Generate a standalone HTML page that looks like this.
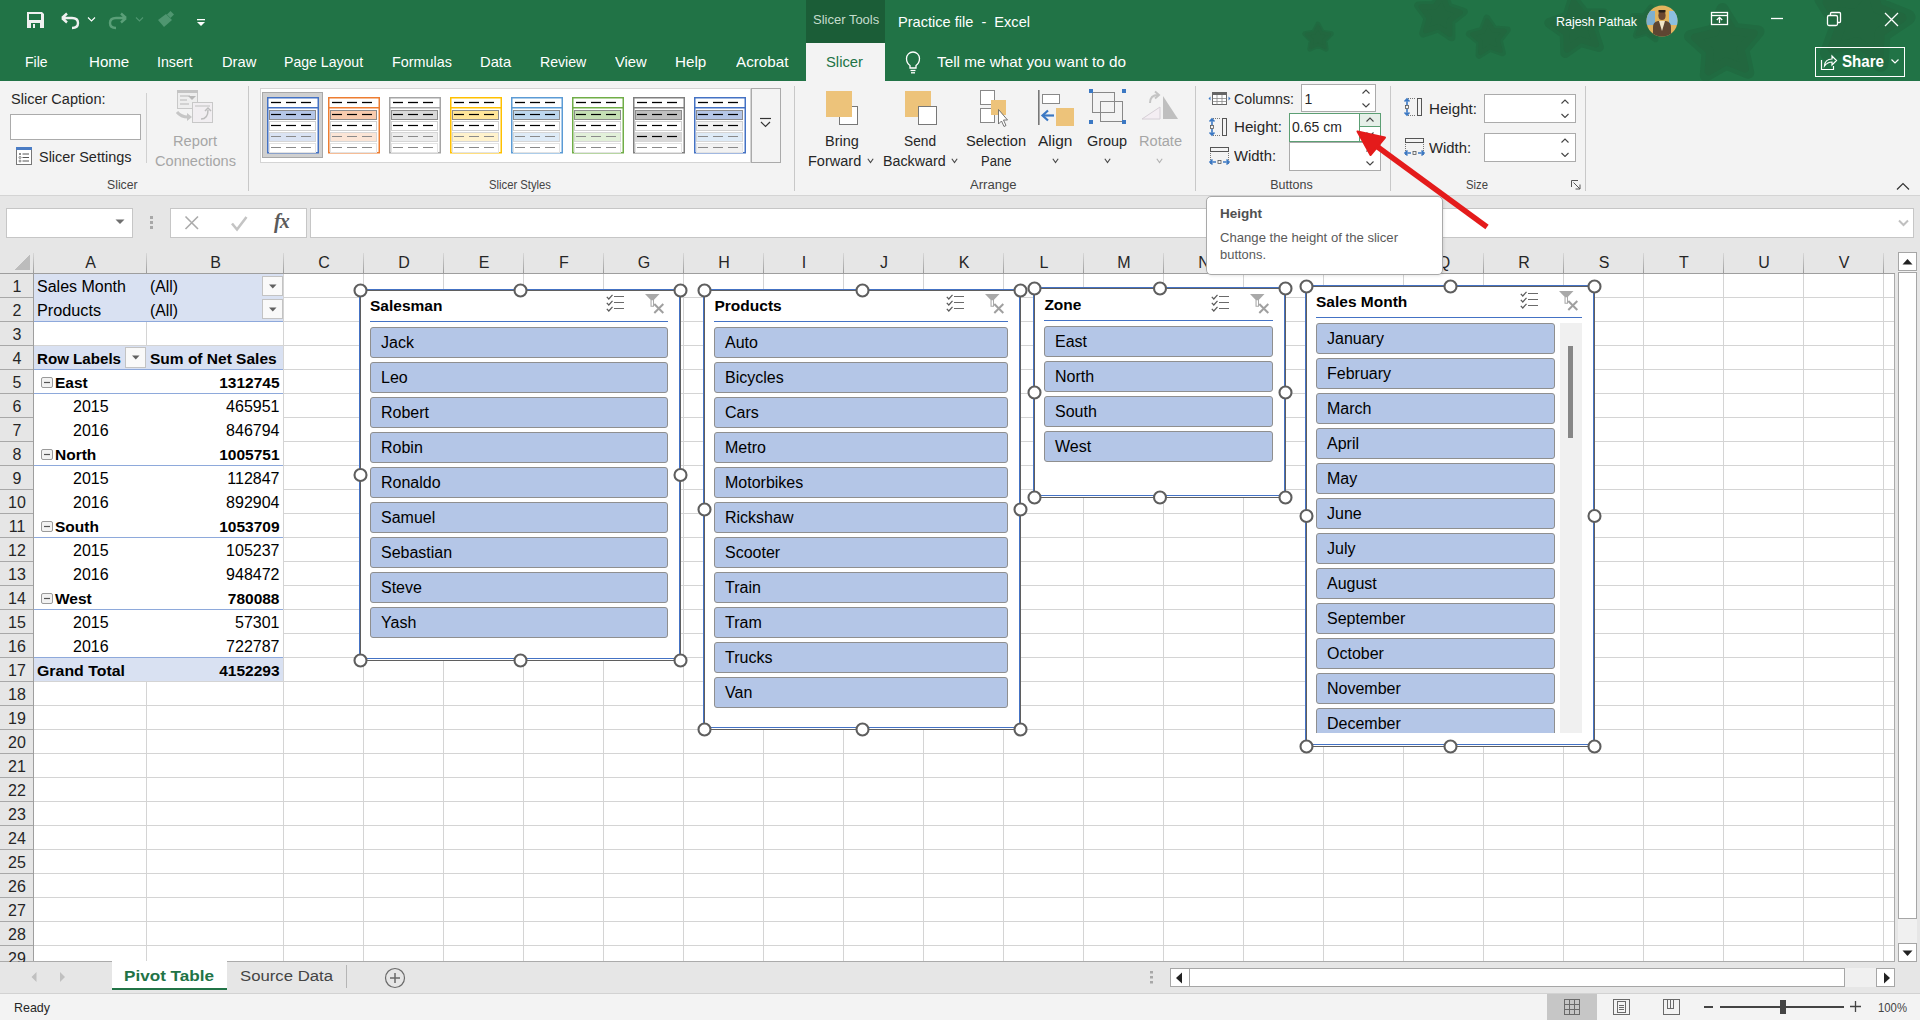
<!DOCTYPE html>
<html><head><meta charset="utf-8">
<style>
*{margin:0;padding:0;box-sizing:border-box}
html,body{width:1920px;height:1020px;overflow:hidden;background:#fff;font-family:"Liberation Sans",sans-serif;color:#262626}
.a{position:absolute}
.t{position:absolute;white-space:nowrap;line-height:1}
svg{display:block}
</style></head><body>
<div class="a" style="left:0;top:0;width:1920px;height:81px;background:#217346"></div>
<div class="a" style="left:0;top:81px;width:1920px;height:115px;background:#f3f3f3"></div>
<div class="a" style="left:0;top:195px;width:1920px;height:1px;background:#d4d4d4"></div>
<div class="a" style="left:0;top:196px;width:1920px;height:54px;background:#e6e6e6"></div>
<svg class="a" style="left:0;top:0" width="1920" height="81"><polygon points="1318.0,24.0 1322.3,32.1 1331.3,33.7 1324.9,40.2 1326.2,49.3 1318.0,45.3 1309.8,49.3 1311.1,40.2 1304.7,33.7 1313.7,32.1" fill="#206b41" stroke="#206b41" stroke-width="4.8" stroke-linejoin="round"/><polygon points="1318.0,26.0 1321.7,32.9 1329.5,34.3 1324.0,39.9 1325.1,47.7 1318.0,44.3 1310.9,47.7 1312.0,39.9 1306.5,34.3 1314.3,32.9" fill="#22673f" stroke="#22673f" stroke-width="3.1" stroke-linejoin="round"/><polygon points="1443.3,-7.8 1448.7,7.0 1463.6,11.8 1451.2,21.5 1451.3,37.2 1438.3,28.4 1423.3,33.3 1427.7,18.2 1418.4,5.5 1434.1,5.0" fill="#206b41" stroke="#206b41" stroke-width="8.2" stroke-linejoin="round"/><polygon points="1442.9,-4.4 1447.5,8.3 1460.3,12.4 1449.6,20.7 1449.7,34.2 1438.5,26.6 1425.7,30.8 1429.4,17.9 1421.4,7.0 1435.0,6.5" fill="#22673f" stroke="#22673f" stroke-width="5.3" stroke-linejoin="round"/><polygon points="1486.9,18.1 1494.2,29.0 1507.3,29.9 1499.2,40.2 1502.4,52.9 1490.1,48.3 1479.0,55.3 1479.5,42.2 1469.4,33.8 1482.0,30.3" fill="#206b41" stroke="#206b41" stroke-width="6.8" stroke-linejoin="round"/><polygon points="1487.2,20.9 1493.5,30.3 1504.7,31.0 1497.7,39.9 1500.5,50.8 1489.9,46.9 1480.4,52.9 1480.8,41.6 1472.2,34.4 1483.0,31.4" fill="#22673f" stroke="#22673f" stroke-width="4.4" stroke-linejoin="round"/><polygon points="1573.0,-1.6 1584.6,13.4 1603.6,13.4 1592.9,29.1 1598.9,47.1 1580.6,41.9 1565.3,53.1 1564.7,34.1 1549.3,23.0 1567.2,16.5" fill="#206b41" stroke="#206b41" stroke-width="9.9" stroke-linejoin="round"/><polygon points="1573.7,2.4 1583.7,15.3 1600.0,15.3 1590.8,28.8 1595.9,44.3 1580.3,39.8 1567.1,49.4 1566.5,33.1 1553.3,23.5 1568.7,18.0" fill="#22673f" stroke="#22673f" stroke-width="6.4" stroke-linejoin="round"/><polygon points="1651.0,7.3 1654.4,17.9 1664.8,21.6 1655.8,28.2 1655.5,39.3 1646.5,32.7 1635.8,35.8 1639.2,25.2 1633.0,16.0 1644.1,16.1" fill="#206b41" stroke="#206b41" stroke-width="5.8" stroke-linejoin="round"/><polygon points="1650.5,9.6 1653.5,18.7 1662.5,22.0 1654.7,27.6 1654.4,37.1 1646.7,31.5 1637.5,34.2 1640.5,25.1 1635.1,17.1 1644.7,17.2" fill="#22673f" stroke="#22673f" stroke-width="3.7" stroke-linejoin="round"/><polygon points="1722.5,9.1 1734.9,29.1 1758.4,31.5 1743.2,49.5 1748.1,72.6 1726.3,63.7 1705.9,75.5 1707.6,52.0 1690.1,36.3 1713.0,30.7" fill="#206b41" stroke="#206b41" stroke-width="12.2" stroke-linejoin="round"/><polygon points="1722.8,14.1 1733.5,31.3 1753.7,33.4 1740.6,48.9 1744.9,68.7 1726.1,61.1 1708.6,71.3 1710.1,51.0 1695.0,37.5 1714.7,32.7" fill="#22673f" stroke="#22673f" stroke-width="7.9" stroke-linejoin="round"/><polygon points="1871.6,-23.0 1879.8,6.0 1907.7,17.2 1882.7,34.0 1880.7,64.0 1857.0,45.4 1827.8,52.8 1838.2,24.5 1822.2,-1.0 1852.3,0.1" fill="#206b41" stroke="#206b41" stroke-width="15.6" stroke-linejoin="round"/><polygon points="1870.2,-16.7 1877.3,8.2 1901.3,17.9 1879.8,32.3 1878.1,58.1 1857.7,42.1 1832.6,48.5 1841.5,24.2 1827.7,2.2 1853.6,3.2" fill="#22673f" stroke="#22673f" stroke-width="10.1" stroke-linejoin="round"/></svg>
<div class="a" style="left:806px;top:0px;width:79px;height:43px;background:#1b5d37"></div>
<div class="a" style="left:806px;top:43px;width:79px;height:38px;background:#f3f3f3"></div>
<div class="t" style="left:813.00px;top:13px;font-size:13.00px;color:#c5dccc;">Slicer Tools</div>
<div class="t" style="left:898.00px;top:14px;font-size:15.00px;color:#ffffff;transform:scaleX(0.9715);transform-origin:0 0;white-space:pre;">Practice file  -  Excel</div>
<div class="t" style="left:1556.00px;top:15px;font-size:13.50px;color:#ffffff;transform:scaleX(0.9226);transform-origin:0 0;">Rajesh Pathak</div>
<svg class="a" style="left:1646px;top:5px" width="32" height="32"><defs><clipPath id="av"><circle cx="16" cy="16" r="15.5"/></clipPath></defs><g clip-path="url(#av)"><rect width="32" height="32" fill="#e2b45e"/><rect x="0" y="6" width="9" height="14" fill="#7fb0d0"/><rect x="23" y="6" width="9" height="14" fill="#8cc0e0"/><path d="M7 32V22Q7 17 12 16H20Q25 17 25 22V32Z" fill="#5e4632"/><path d="M13 16L16 26L19 16Z" fill="#f2e6c8"/><ellipse cx="16" cy="10.5" rx="3.6" ry="4.5" fill="#6a4630"/><rect x="12.5" y="5" width="7" height="2.5" fill="#2a1f18"/></g></svg>
<svg class="a" style="left:1700px;top:0" width="220" height="43" fill="none" stroke="#fff" stroke-width="1.3"><rect x="11.5" y="12.5" width="16" height="12"/><line x1="11.5" y1="15.5" x2="27.5" y2="15.5"/><path d="M19.5 23V17.5M16.8 20L19.5 17.3L22.2 20"/><line x1="71" y1="18.5" x2="83" y2="18.5"/><rect x="127.5" y="15.5" width="10" height="10" rx="1.5"/><path d="M130.5 15.5V13.5Q130.5 12.5 131.5 12.5H139.5Q140.5 12.5 140.5 13.5V21.5Q140.5 22.5 139.5 22.5H137.5"/><path d="M185 13L198 26M198 13L185 26"/></svg>
<svg class="a" style="left:0;top:0" width="220" height="43"><path d="M27 12H42L44 14V28H27Z" fill="#f0f0f0"/><rect x="29" y="14" width="12" height="6" fill="#217346"/><rect x="31" y="23" width="9" height="5" fill="#217346"/><rect x="33" y="24" width="2" height="4" fill="#f0f0f0"/><path d="M62 18L67 13.5M62 18L67 22.5M62.5 18H72Q78 18 78 23Q78 28 72 28" fill="none" stroke="#f0f0f0" stroke-width="2.4"/><path d="M88 17.5L91.5 21L95 17.5" fill="none" stroke="#fff" stroke-width="1.1"/><path d="M126 18L121 13.5M126 18L121 22.5M125.5 18H116Q110 18 110 23Q110 28 116 28" fill="none" stroke="#5a9f78" stroke-width="2.4"/><path d="M136 17.5L139.5 21L143 17.5" fill="none" stroke="#4f9670" stroke-width="1.1"/><path d="M158 20L166 14L172 20L164 27Z" fill="#4f9670"/><rect x="168" y="12" width="5" height="5" transform="rotate(45 170.5 14.5)" fill="#4f9670"/><rect x="197" y="19" width="8" height="1.3" fill="#fff"/><path d="M197 22H205L201 26Z" fill="#fff"/></svg>
<div class="t" style="left:25.40px;top:55px;font-size:14.50px;color:#ffffff;transform:scaleX(0.9631);transform-origin:0 0;">File</div>
<div class="t" style="left:88.50px;top:55px;font-size:14.50px;color:#ffffff;transform:scaleX(1.0407);transform-origin:0 0;">Home</div>
<div class="t" style="left:157.30px;top:55px;font-size:14.50px;color:#ffffff;transform:scaleX(0.9762);transform-origin:0 0;">Insert</div>
<div class="t" style="left:221.50px;top:55px;font-size:14.50px;color:#ffffff;transform:scaleX(1.0137);transform-origin:0 0;">Draw</div>
<div class="t" style="left:284.40px;top:55px;font-size:14.50px;color:#ffffff;transform:scaleX(0.9715);transform-origin:0 0;">Page Layout</div>
<div class="t" style="left:392.00px;top:55px;font-size:14.50px;color:#ffffff;transform:scaleX(0.9897);transform-origin:0 0;">Formulas</div>
<div class="t" style="left:480.20px;top:55px;font-size:14.50px;color:#ffffff;transform:scaleX(1.0155);transform-origin:0 0;">Data</div>
<div class="t" style="left:540.40px;top:55px;font-size:14.50px;color:#ffffff;transform:scaleX(0.9739);transform-origin:0 0;">Review</div>
<div class="t" style="left:615.20px;top:55px;font-size:14.50px;color:#ffffff;transform:scaleX(1.0171);transform-origin:0 0;">View</div>
<div class="t" style="left:675.30px;top:55px;font-size:14.50px;color:#ffffff;transform:scaleX(1.0496);transform-origin:0 0;">Help</div>
<div class="t" style="left:735.50px;top:55px;font-size:14.50px;color:#ffffff;transform:scaleX(1.0507);transform-origin:0 0;">Acrobat</div>
<div class="t" style="left:826.00px;top:55px;font-size:14.50px;color:#217346;transform:scaleX(1.0205);transform-origin:0 0;">Slicer</div>
<svg class="a" style="left:904px;top:50px" width="20" height="26" fill="none" stroke="#fff" stroke-width="1.3"><path d="M6 15.5Q2.5 13 2.5 8.5A6.5 6.5 0 0 1 15.5 8.5Q15.5 13 12 15.5V18H6Z"/><line x1="6.5" y1="20.5" x2="11.5" y2="20.5"/><line x1="7" y1="22.8" x2="11" y2="22.8"/></svg>
<div class="t" style="left:937.00px;top:55px;font-size:14.50px;color:#ffffff;transform:scaleX(1.0564);transform-origin:0 0;">Tell me what you want to do</div>
<div class="a" style="left:1815px;top:47px;width:90px;height:30px;border:1.3px solid #fff"></div>
<svg class="a" style="left:1819px;top:51px" width="20" height="22" fill="none" stroke="#fff" stroke-width="1.2"><path d="M2.5 9V18.5H14.5V15"/><path d="M5.5 15Q6 8 13 8V5L17.5 9.5L13 14V11Q8.5 11 5.5 15Z"/></svg>
<div class="t" style="left:1842.00px;top:54px;font-size:16.00px;color:#ffffff;font-weight:bold;transform:scaleX(0.9445);transform-origin:0 0;">Share</div>
<svg class="a" style="left:1890px;top:58px" width="12" height="8"><path d="M1.5 1.5L5 5L8.5 1.5" fill="none" stroke="#fff" stroke-width="1.2"/></svg>
<div class="t" style="left:10.50px;top:92px;font-size:14.00px;color:#262626;transform:scaleX(1.0380);transform-origin:0 0;">Slicer Caption:</div>
<div class="a" style="left:10px;top:114px;width:131px;height:26px;background:#fff;border:1px solid #ababab"></div>
<svg class="a" style="left:15px;top:146px" width="18" height="20"><rect x="1.5" y="1.5" width="15" height="17" fill="#fff" stroke="#777"/><rect x="1" y="1" width="16" height="3" fill="#4a7cc4"/><circle cx="5" cy="8" r="1" fill="#666"/><circle cx="5" cy="11.5" r="1" fill="none" stroke="#666" stroke-width="0.8"/><circle cx="5" cy="15" r="1" fill="none" stroke="#666" stroke-width="0.8"/><line x1="7.5" y1="8" x2="14" y2="8" stroke="#555"/><line x1="7.5" y1="11.5" x2="14" y2="11.5" stroke="#555"/><line x1="7.5" y1="15" x2="14" y2="15" stroke="#555"/></svg>
<div class="t" style="left:38.50px;top:150px;font-size:14.00px;color:#262626;transform:scaleX(1.0338);transform-origin:0 0;">Slicer Settings</div>
<div class="a" style="left:146px;top:93px;width:1px;height:70px;background:#d0d0d0"></div>
<svg class="a" style="left:175px;top:89px" width="40" height="38"><rect x="2.5" y="1.5" width="20" height="18" fill="#eeeeee" stroke="#c8c8c8"/><rect x="2" y="1" width="21" height="3" fill="#c4c4c4"/><line x1="5" y1="7" x2="15" y2="7" stroke="#c8c8c8" stroke-width="1.5"/><line x1="5" y1="11" x2="12" y2="11" stroke="#c8c8c8" stroke-width="1.5"/><line x1="5" y1="15" x2="14" y2="15" stroke="#c8c8c8" stroke-width="1.5"/><path d="M13 7H21L17 11Z" fill="#b8b8b8"/><rect x="17.5" y="13.5" width="20" height="20" fill="#f1eef1" stroke="#c8c8c8"/><line x1="20" y1="17" x2="35" y2="17" stroke="#cfcfcf" stroke-width="1.5"/><path d="M2 23Q6 28 13 28" fill="none" stroke="#c6c6c6" stroke-width="3"/><path d="M12 24L17 28L12 32Z" fill="#c6c6c6"/><path d="M26 30Q33 30 33 21" fill="none" stroke="#bdbdbd" stroke-width="1.5"/><path d="M30 22L33 19L36 22" fill="none" stroke="#bdbdbd" stroke-width="1.5"/></svg>
<div class="t" style="left:173.00px;top:134px;font-size:14.00px;color:#a6a6a6;transform:scaleX(1.0472);transform-origin:0 0;">Report</div>
<div class="t" style="left:155.00px;top:154px;font-size:14.00px;color:#a6a6a6;transform:scaleX(1.0408);transform-origin:0 0;">Connections</div>
<div class="t" style="left:107.20px;top:179px;font-size:12.50px;color:#444;transform:scaleX(0.9790);transform-origin:0 0;">Slicer</div>
<div class="a" style="left:248px;top:86px;width:1px;height:105px;background:#c8c8c8"></div>
<div class="a" style="left:260px;top:88px;width:491px;height:75px;background:#fff;border:1px solid #d4d4d4"></div>
<div class="a" style="left:262px;top:92px;width:61px;height:66px;background:#d0d0d0;border:1px solid #a8a8a8"></div>
<svg class="a" style="left:267px;top:97px" width="52" height="57"><rect x="0.75" y="0.75" width="50.5" height="55" fill="#fff" stroke="#4472c4" stroke-width="1.5"/><line x1="1" y1="10.75" x2="51" y2="10.75" stroke="#4472c4" stroke-width="1.3"/><line x1="4" y1="5.5" x2="14" y2="5.5" stroke="#000" stroke-width="1.3"/><line x1="19" y1="5.5" x2="29" y2="5.5" stroke="#000" stroke-width="1.3"/><line x1="34" y1="5.5" x2="44" y2="5.5" stroke="#000" stroke-width="1.3"/><rect x="2.5" y="13.5" width="46" height="9" fill="#b4c6e7" stroke="#8c8c8c" stroke-width="1"/><line x1="4" y1="17.5" x2="14" y2="17.5" stroke="#000" stroke-width="1.2"/><line x1="19" y1="17.5" x2="29" y2="17.5" stroke="#000" stroke-width="1.2"/><line x1="34" y1="17.5" x2="44" y2="17.5" stroke="#000" stroke-width="1.2"/><rect x="2.5" y="24.5" width="46" height="9" fill="#ffffff" stroke="#d0d0d0" stroke-width="1"/><line x1="4" y1="28.5" x2="14" y2="28.5" stroke="#000" stroke-width="1.2"/><line x1="19" y1="28.5" x2="29" y2="28.5" stroke="#000" stroke-width="1.2"/><line x1="34" y1="28.5" x2="44" y2="28.5" stroke="#000" stroke-width="1.2"/><rect x="2.5" y="35.5" width="46" height="9" fill="#dae3f3" stroke="#d6d6d6" stroke-width="1"/><line x1="4" y1="39.5" x2="14" y2="39.5" stroke="#8a8a8a" stroke-width="1.0"/><line x1="19" y1="39.5" x2="29" y2="39.5" stroke="#8a8a8a" stroke-width="1.0"/><line x1="34" y1="39.5" x2="44" y2="39.5" stroke="#8a8a8a" stroke-width="1.0"/><rect x="2.5" y="46.5" width="46" height="9" fill="#ffffff" stroke="#e3e3e3" stroke-width="1"/><line x1="4" y1="50.5" x2="14" y2="50.5" stroke="#8a8a8a" stroke-width="1.0"/><line x1="19" y1="50.5" x2="29" y2="50.5" stroke="#8a8a8a" stroke-width="1.0"/><line x1="34" y1="50.5" x2="44" y2="50.5" stroke="#8a8a8a" stroke-width="1.0"/></svg>
<svg class="a" style="left:328px;top:97px" width="52" height="57"><rect x="0.75" y="0.75" width="50.5" height="55" fill="#fff" stroke="#ed7d31" stroke-width="1.5"/><line x1="1" y1="10.75" x2="51" y2="10.75" stroke="#ed7d31" stroke-width="1.3"/><line x1="4" y1="5.5" x2="14" y2="5.5" stroke="#000" stroke-width="1.3"/><line x1="19" y1="5.5" x2="29" y2="5.5" stroke="#000" stroke-width="1.3"/><line x1="34" y1="5.5" x2="44" y2="5.5" stroke="#000" stroke-width="1.3"/><rect x="2.5" y="13.5" width="46" height="9" fill="#f8cbad" stroke="#8c8c8c" stroke-width="1"/><line x1="4" y1="17.5" x2="14" y2="17.5" stroke="#000" stroke-width="1.2"/><line x1="19" y1="17.5" x2="29" y2="17.5" stroke="#000" stroke-width="1.2"/><line x1="34" y1="17.5" x2="44" y2="17.5" stroke="#000" stroke-width="1.2"/><rect x="2.5" y="24.5" width="46" height="9" fill="#ffffff" stroke="#d0d0d0" stroke-width="1"/><line x1="4" y1="28.5" x2="14" y2="28.5" stroke="#000" stroke-width="1.2"/><line x1="19" y1="28.5" x2="29" y2="28.5" stroke="#000" stroke-width="1.2"/><line x1="34" y1="28.5" x2="44" y2="28.5" stroke="#000" stroke-width="1.2"/><rect x="2.5" y="35.5" width="46" height="9" fill="#fbe5d6" stroke="#d6d6d6" stroke-width="1"/><line x1="4" y1="39.5" x2="14" y2="39.5" stroke="#8a8a8a" stroke-width="1.0"/><line x1="19" y1="39.5" x2="29" y2="39.5" stroke="#8a8a8a" stroke-width="1.0"/><line x1="34" y1="39.5" x2="44" y2="39.5" stroke="#8a8a8a" stroke-width="1.0"/><rect x="2.5" y="46.5" width="46" height="9" fill="#ffffff" stroke="#e3e3e3" stroke-width="1"/><line x1="4" y1="50.5" x2="14" y2="50.5" stroke="#8a8a8a" stroke-width="1.0"/><line x1="19" y1="50.5" x2="29" y2="50.5" stroke="#8a8a8a" stroke-width="1.0"/><line x1="34" y1="50.5" x2="44" y2="50.5" stroke="#8a8a8a" stroke-width="1.0"/></svg>
<svg class="a" style="left:389px;top:97px" width="52" height="57"><rect x="0.75" y="0.75" width="50.5" height="55" fill="#fff" stroke="#a5a5a5" stroke-width="1.5"/><line x1="1" y1="10.75" x2="51" y2="10.75" stroke="#a5a5a5" stroke-width="1.3"/><line x1="4" y1="5.5" x2="14" y2="5.5" stroke="#000" stroke-width="1.3"/><line x1="19" y1="5.5" x2="29" y2="5.5" stroke="#000" stroke-width="1.3"/><line x1="34" y1="5.5" x2="44" y2="5.5" stroke="#000" stroke-width="1.3"/><rect x="2.5" y="13.5" width="46" height="9" fill="#d9d9d9" stroke="#8c8c8c" stroke-width="1"/><line x1="4" y1="17.5" x2="14" y2="17.5" stroke="#000" stroke-width="1.2"/><line x1="19" y1="17.5" x2="29" y2="17.5" stroke="#000" stroke-width="1.2"/><line x1="34" y1="17.5" x2="44" y2="17.5" stroke="#000" stroke-width="1.2"/><rect x="2.5" y="24.5" width="46" height="9" fill="#ffffff" stroke="#d0d0d0" stroke-width="1"/><line x1="4" y1="28.5" x2="14" y2="28.5" stroke="#000" stroke-width="1.2"/><line x1="19" y1="28.5" x2="29" y2="28.5" stroke="#000" stroke-width="1.2"/><line x1="34" y1="28.5" x2="44" y2="28.5" stroke="#000" stroke-width="1.2"/><rect x="2.5" y="35.5" width="46" height="9" fill="#ededed" stroke="#d6d6d6" stroke-width="1"/><line x1="4" y1="39.5" x2="14" y2="39.5" stroke="#8a8a8a" stroke-width="1.0"/><line x1="19" y1="39.5" x2="29" y2="39.5" stroke="#8a8a8a" stroke-width="1.0"/><line x1="34" y1="39.5" x2="44" y2="39.5" stroke="#8a8a8a" stroke-width="1.0"/><rect x="2.5" y="46.5" width="46" height="9" fill="#ffffff" stroke="#e3e3e3" stroke-width="1"/><line x1="4" y1="50.5" x2="14" y2="50.5" stroke="#8a8a8a" stroke-width="1.0"/><line x1="19" y1="50.5" x2="29" y2="50.5" stroke="#8a8a8a" stroke-width="1.0"/><line x1="34" y1="50.5" x2="44" y2="50.5" stroke="#8a8a8a" stroke-width="1.0"/></svg>
<svg class="a" style="left:450px;top:97px" width="52" height="57"><rect x="0.75" y="0.75" width="50.5" height="55" fill="#fff" stroke="#ffc000" stroke-width="1.5"/><line x1="1" y1="10.75" x2="51" y2="10.75" stroke="#ffc000" stroke-width="1.3"/><line x1="4" y1="5.5" x2="14" y2="5.5" stroke="#000" stroke-width="1.3"/><line x1="19" y1="5.5" x2="29" y2="5.5" stroke="#000" stroke-width="1.3"/><line x1="34" y1="5.5" x2="44" y2="5.5" stroke="#000" stroke-width="1.3"/><rect x="2.5" y="13.5" width="46" height="9" fill="#ffe699" stroke="#8c8c8c" stroke-width="1"/><line x1="4" y1="17.5" x2="14" y2="17.5" stroke="#000" stroke-width="1.2"/><line x1="19" y1="17.5" x2="29" y2="17.5" stroke="#000" stroke-width="1.2"/><line x1="34" y1="17.5" x2="44" y2="17.5" stroke="#000" stroke-width="1.2"/><rect x="2.5" y="24.5" width="46" height="9" fill="#ffffff" stroke="#d0d0d0" stroke-width="1"/><line x1="4" y1="28.5" x2="14" y2="28.5" stroke="#000" stroke-width="1.2"/><line x1="19" y1="28.5" x2="29" y2="28.5" stroke="#000" stroke-width="1.2"/><line x1="34" y1="28.5" x2="44" y2="28.5" stroke="#000" stroke-width="1.2"/><rect x="2.5" y="35.5" width="46" height="9" fill="#fff2cc" stroke="#d6d6d6" stroke-width="1"/><line x1="4" y1="39.5" x2="14" y2="39.5" stroke="#8a8a8a" stroke-width="1.0"/><line x1="19" y1="39.5" x2="29" y2="39.5" stroke="#8a8a8a" stroke-width="1.0"/><line x1="34" y1="39.5" x2="44" y2="39.5" stroke="#8a8a8a" stroke-width="1.0"/><rect x="2.5" y="46.5" width="46" height="9" fill="#ffffff" stroke="#e3e3e3" stroke-width="1"/><line x1="4" y1="50.5" x2="14" y2="50.5" stroke="#8a8a8a" stroke-width="1.0"/><line x1="19" y1="50.5" x2="29" y2="50.5" stroke="#8a8a8a" stroke-width="1.0"/><line x1="34" y1="50.5" x2="44" y2="50.5" stroke="#8a8a8a" stroke-width="1.0"/></svg>
<svg class="a" style="left:511px;top:97px" width="52" height="57"><rect x="0.75" y="0.75" width="50.5" height="55" fill="#fff" stroke="#5b9bd5" stroke-width="1.5"/><line x1="1" y1="10.75" x2="51" y2="10.75" stroke="#5b9bd5" stroke-width="1.3"/><line x1="4" y1="5.5" x2="14" y2="5.5" stroke="#000" stroke-width="1.3"/><line x1="19" y1="5.5" x2="29" y2="5.5" stroke="#000" stroke-width="1.3"/><line x1="34" y1="5.5" x2="44" y2="5.5" stroke="#000" stroke-width="1.3"/><rect x="2.5" y="13.5" width="46" height="9" fill="#bdd7ee" stroke="#8c8c8c" stroke-width="1"/><line x1="4" y1="17.5" x2="14" y2="17.5" stroke="#000" stroke-width="1.2"/><line x1="19" y1="17.5" x2="29" y2="17.5" stroke="#000" stroke-width="1.2"/><line x1="34" y1="17.5" x2="44" y2="17.5" stroke="#000" stroke-width="1.2"/><rect x="2.5" y="24.5" width="46" height="9" fill="#ffffff" stroke="#d0d0d0" stroke-width="1"/><line x1="4" y1="28.5" x2="14" y2="28.5" stroke="#000" stroke-width="1.2"/><line x1="19" y1="28.5" x2="29" y2="28.5" stroke="#000" stroke-width="1.2"/><line x1="34" y1="28.5" x2="44" y2="28.5" stroke="#000" stroke-width="1.2"/><rect x="2.5" y="35.5" width="46" height="9" fill="#deebf7" stroke="#d6d6d6" stroke-width="1"/><line x1="4" y1="39.5" x2="14" y2="39.5" stroke="#8a8a8a" stroke-width="1.0"/><line x1="19" y1="39.5" x2="29" y2="39.5" stroke="#8a8a8a" stroke-width="1.0"/><line x1="34" y1="39.5" x2="44" y2="39.5" stroke="#8a8a8a" stroke-width="1.0"/><rect x="2.5" y="46.5" width="46" height="9" fill="#ffffff" stroke="#e3e3e3" stroke-width="1"/><line x1="4" y1="50.5" x2="14" y2="50.5" stroke="#8a8a8a" stroke-width="1.0"/><line x1="19" y1="50.5" x2="29" y2="50.5" stroke="#8a8a8a" stroke-width="1.0"/><line x1="34" y1="50.5" x2="44" y2="50.5" stroke="#8a8a8a" stroke-width="1.0"/></svg>
<svg class="a" style="left:572px;top:97px" width="52" height="57"><rect x="0.75" y="0.75" width="50.5" height="55" fill="#fff" stroke="#70ad47" stroke-width="1.5"/><line x1="1" y1="10.75" x2="51" y2="10.75" stroke="#70ad47" stroke-width="1.3"/><line x1="4" y1="5.5" x2="14" y2="5.5" stroke="#000" stroke-width="1.3"/><line x1="19" y1="5.5" x2="29" y2="5.5" stroke="#000" stroke-width="1.3"/><line x1="34" y1="5.5" x2="44" y2="5.5" stroke="#000" stroke-width="1.3"/><rect x="2.5" y="13.5" width="46" height="9" fill="#c5e0b4" stroke="#8c8c8c" stroke-width="1"/><line x1="4" y1="17.5" x2="14" y2="17.5" stroke="#000" stroke-width="1.2"/><line x1="19" y1="17.5" x2="29" y2="17.5" stroke="#000" stroke-width="1.2"/><line x1="34" y1="17.5" x2="44" y2="17.5" stroke="#000" stroke-width="1.2"/><rect x="2.5" y="24.5" width="46" height="9" fill="#ffffff" stroke="#d0d0d0" stroke-width="1"/><line x1="4" y1="28.5" x2="14" y2="28.5" stroke="#000" stroke-width="1.2"/><line x1="19" y1="28.5" x2="29" y2="28.5" stroke="#000" stroke-width="1.2"/><line x1="34" y1="28.5" x2="44" y2="28.5" stroke="#000" stroke-width="1.2"/><rect x="2.5" y="35.5" width="46" height="9" fill="#e2f0d9" stroke="#d6d6d6" stroke-width="1"/><line x1="4" y1="39.5" x2="14" y2="39.5" stroke="#8a8a8a" stroke-width="1.0"/><line x1="19" y1="39.5" x2="29" y2="39.5" stroke="#8a8a8a" stroke-width="1.0"/><line x1="34" y1="39.5" x2="44" y2="39.5" stroke="#8a8a8a" stroke-width="1.0"/><rect x="2.5" y="46.5" width="46" height="9" fill="#ffffff" stroke="#e3e3e3" stroke-width="1"/><line x1="4" y1="50.5" x2="14" y2="50.5" stroke="#8a8a8a" stroke-width="1.0"/><line x1="19" y1="50.5" x2="29" y2="50.5" stroke="#8a8a8a" stroke-width="1.0"/><line x1="34" y1="50.5" x2="44" y2="50.5" stroke="#8a8a8a" stroke-width="1.0"/></svg>
<svg class="a" style="left:633px;top:97px" width="52" height="57"><rect x="0.75" y="0.75" width="50.5" height="55" fill="#fff" stroke="#7f7f7f" stroke-width="1.5"/><line x1="1" y1="10.75" x2="51" y2="10.75" stroke="#7f7f7f" stroke-width="1.3"/><line x1="4" y1="5.5" x2="14" y2="5.5" stroke="#000" stroke-width="1.3"/><line x1="19" y1="5.5" x2="29" y2="5.5" stroke="#000" stroke-width="1.3"/><line x1="34" y1="5.5" x2="44" y2="5.5" stroke="#000" stroke-width="1.3"/><rect x="2.5" y="13.5" width="46" height="9" fill="#bfbfbf" stroke="#8c8c8c" stroke-width="1"/><line x1="4" y1="17.5" x2="14" y2="17.5" stroke="#000" stroke-width="1.2"/><line x1="19" y1="17.5" x2="29" y2="17.5" stroke="#000" stroke-width="1.2"/><line x1="34" y1="17.5" x2="44" y2="17.5" stroke="#000" stroke-width="1.2"/><rect x="2.5" y="24.5" width="46" height="9" fill="#ffffff" stroke="#d0d0d0" stroke-width="1"/><line x1="4" y1="28.5" x2="14" y2="28.5" stroke="#000" stroke-width="1.2"/><line x1="19" y1="28.5" x2="29" y2="28.5" stroke="#000" stroke-width="1.2"/><line x1="34" y1="28.5" x2="44" y2="28.5" stroke="#000" stroke-width="1.2"/><rect x="2.5" y="35.5" width="46" height="9" fill="#d9d9d9" stroke="#d6d6d6" stroke-width="1"/><line x1="4" y1="39.5" x2="14" y2="39.5" stroke="#000" stroke-width="1.2"/><line x1="19" y1="39.5" x2="29" y2="39.5" stroke="#000" stroke-width="1.2"/><line x1="34" y1="39.5" x2="44" y2="39.5" stroke="#000" stroke-width="1.2"/><rect x="2.5" y="46.5" width="46" height="9" fill="#ffffff" stroke="#e3e3e3" stroke-width="1"/><line x1="4" y1="50.5" x2="14" y2="50.5" stroke="#8a8a8a" stroke-width="1.0"/><line x1="19" y1="50.5" x2="29" y2="50.5" stroke="#8a8a8a" stroke-width="1.0"/><line x1="34" y1="50.5" x2="44" y2="50.5" stroke="#8a8a8a" stroke-width="1.0"/></svg>
<svg class="a" style="left:694px;top:97px" width="52" height="57"><rect x="0.75" y="0.75" width="50.5" height="55" fill="#fff" stroke="#4472c4" stroke-width="1.5"/><line x1="1" y1="10.75" x2="51" y2="10.75" stroke="#4472c4" stroke-width="1.3"/><line x1="4" y1="5.5" x2="14" y2="5.5" stroke="#000" stroke-width="1.3"/><line x1="19" y1="5.5" x2="29" y2="5.5" stroke="#000" stroke-width="1.3"/><line x1="34" y1="5.5" x2="44" y2="5.5" stroke="#000" stroke-width="1.3"/><rect x="2.5" y="13.5" width="46" height="9" fill="#b4c6e7" stroke="#8c8c8c" stroke-width="1"/><line x1="4" y1="17.5" x2="14" y2="17.5" stroke="#000" stroke-width="1.2"/><line x1="19" y1="17.5" x2="29" y2="17.5" stroke="#000" stroke-width="1.2"/><line x1="34" y1="17.5" x2="44" y2="17.5" stroke="#000" stroke-width="1.2"/><rect x="2.5" y="24.5" width="46" height="9" fill="#f2f2f2" stroke="#d0d0d0" stroke-width="1"/><line x1="4" y1="28.5" x2="14" y2="28.5" stroke="#000" stroke-width="1.2"/><line x1="19" y1="28.5" x2="29" y2="28.5" stroke="#000" stroke-width="1.2"/><line x1="34" y1="28.5" x2="44" y2="28.5" stroke="#000" stroke-width="1.2"/><rect x="2.5" y="35.5" width="46" height="9" fill="#deebf7" stroke="#d6d6d6" stroke-width="1"/><line x1="4" y1="39.5" x2="14" y2="39.5" stroke="#8a8a8a" stroke-width="1.0"/><line x1="19" y1="39.5" x2="29" y2="39.5" stroke="#8a8a8a" stroke-width="1.0"/><line x1="34" y1="39.5" x2="44" y2="39.5" stroke="#8a8a8a" stroke-width="1.0"/><rect x="2.5" y="46.5" width="46" height="9" fill="#f2f2f2" stroke="#e3e3e3" stroke-width="1"/><line x1="4" y1="50.5" x2="14" y2="50.5" stroke="#8a8a8a" stroke-width="1.0"/><line x1="19" y1="50.5" x2="29" y2="50.5" stroke="#8a8a8a" stroke-width="1.0"/><line x1="34" y1="50.5" x2="44" y2="50.5" stroke="#8a8a8a" stroke-width="1.0"/></svg>
<div class="a" style="left:751px;top:88px;width:30px;height:75px;background:#f3f3f3;border:1px solid #aaaaaa"></div>
<svg class="a" style="left:759px;top:117px" width="14" height="12" fill="none" stroke="#333" stroke-width="1.2"><line x1="1" y1="1.5" x2="12" y2="1.5"/><path d="M2 5L6.5 9.5L11 5"/></svg>
<div class="t" style="left:488.50px;top:179px;font-size:12.50px;color:#444;transform:scaleX(0.9016);transform-origin:0 0;">Slicer Styles</div>
<div class="a" style="left:794px;top:86px;width:1px;height:105px;background:#c8c8c8"></div>
<svg class="a" style="left:820px;top:88px" width="380" height="40"><rect x="19.5" y="18.5" width="18" height="18" fill="#fff" stroke="#777"/><rect x="6" y="3" width="26" height="26" fill="#edc37a"/><rect x="85" y="3" width="26" height="26" fill="#edc37a"/><rect x="98.5" y="18.5" width="18" height="18" fill="#fff" stroke="#777"/><rect x="160.5" y="2.5" width="14" height="14" fill="#fff" stroke="#888"/><rect x="160.5" y="20.5" width="14" height="14" fill="#fff" stroke="#888"/><rect x="171" y="12" width="15" height="15" fill="#edc37a"/><path d="M178.5 21.5V36L181.5 33L184 38.5L186 37.5L183.5 32H187.5Z" fill="#fff" stroke="#666" stroke-width="0.9"/><rect x="218" y="2" width="1.6" height="35" fill="#777"/><rect x="222.5" y="6.5" width="17" height="9" fill="#fff" stroke="#888"/><rect x="236" y="20" width="18" height="18" fill="#edc37a"/><path d="M224 27.5H234" stroke="#3b78c3" stroke-width="2.2"/><path d="M228 22.5L222.5 27.5L228 32.5" fill="none" stroke="#3b78c3" stroke-width="2.2"/><rect x="272.5" y="4.5" width="22" height="20" fill="none" stroke="#888"/><rect x="280.5" y="13.5" width="22" height="20" fill="none" stroke="#888"/><rect x="269" y="1" width="4" height="4" fill="#3b78c3"/><rect x="302" y="1" width="4" height="4" fill="#3b78c3"/><rect x="269" y="32" width="4" height="4" fill="#3b78c3"/><rect x="302" y="32" width="4" height="4" fill="#3b78c3"/><path d="M322 31L340 31L340 19Z" fill="#f4eef3" stroke="#d6d0d6"/><path d="M343 8L343 31L358 31Z" fill="#bfbfbf"/><path d="M330 15Q330 7 338 7" fill="none" stroke="#c4c4c4" stroke-width="2"/><path d="M335 3.5L339 7L335 10.5" fill="none" stroke="#c4c4c4" stroke-width="2"/></svg>
<div class="t" style="left:824.50px;top:134px;font-size:14.00px;color:#262626;transform:scaleX(1.0342);transform-origin:0 0;">Bring</div>
<div class="t" style="left:808.30px;top:154px;font-size:14.00px;color:#262626;transform:scaleX(1.0362);transform-origin:0 0;">Forward</div>
<svg class="a" style="left:866.5px;top:157.5px" width="7" height="6"><path d="M0.8 0.8L3.5 4.5L6.2 0.8" fill="none" stroke="#444" stroke-width="1.1"/></svg>
<div class="t" style="left:904.30px;top:134px;font-size:14.00px;color:#262626;transform:scaleX(0.9788);transform-origin:0 0;">Send</div>
<div class="t" style="left:882.60px;top:154px;font-size:14.00px;color:#262626;transform:scaleX(1.0184);transform-origin:0 0;">Backward</div>
<svg class="a" style="left:951.2px;top:157.5px" width="7" height="6"><path d="M0.8 0.8L3.5 4.5L6.2 0.8" fill="none" stroke="#444" stroke-width="1.1"/></svg>
<div class="t" style="left:966.30px;top:134px;font-size:14.00px;color:#262626;transform:scaleX(1.0436);transform-origin:0 0;">Selection</div>
<div class="t" style="left:981.30px;top:154px;font-size:14.00px;color:#262626;transform:scaleX(0.9298);transform-origin:0 0;">Pane</div>
<div class="t" style="left:1038.00px;top:134px;font-size:14.00px;color:#262626;transform:scaleX(1.1050);transform-origin:0 0;">Align</div>
<svg class="a" style="left:1052.0px;top:157.5px" width="7" height="6"><path d="M0.8 0.8L3.5 4.5L6.2 0.8" fill="none" stroke="#444" stroke-width="1.1"/></svg>
<div class="t" style="left:1087.20px;top:134px;font-size:14.00px;color:#262626;transform:scaleX(1.0307);transform-origin:0 0;">Group</div>
<svg class="a" style="left:1103.7px;top:157.5px" width="7" height="6"><path d="M0.8 0.8L3.5 4.5L6.2 0.8" fill="none" stroke="#444" stroke-width="1.1"/></svg>
<div class="t" style="left:1138.50px;top:134px;font-size:14.00px;color:#a6a6a6;transform:scaleX(1.0425);transform-origin:0 0;">Rotate</div>
<svg class="a" style="left:1156.0px;top:157.5px" width="7" height="6"><path d="M0.8 0.8L3.5 4.5L6.2 0.8" fill="none" stroke="#b0b0b0" stroke-width="1.1"/></svg>
<div class="t" style="left:969.95px;top:179px;font-size:12.50px;color:#444;transform:scaleX(1.0457);transform-origin:0 0;">Arrange</div>
<div class="a" style="left:1195px;top:86px;width:1px;height:105px;background:#c8c8c8"></div>
<svg class="a" style="left:1208px;top:90px" width="24" height="80" fill="none"><rect x="4.5" y="2.5" width="14" height="12" fill="#fff" stroke="#666"/><rect x="4" y="2" width="15" height="3" fill="#666"/><line x1="4.5" y1="8.5" x2="18.5" y2="8.5" stroke="#888" stroke-width="0.8"/><line x1="4.5" y1="11.5" x2="18.5" y2="11.5" stroke="#888" stroke-width="0.8"/><line x1="9" y1="5" x2="9" y2="14.5" stroke="#888" stroke-width="0.8"/><line x1="14" y1="5" x2="14" y2="14.5" stroke="#888" stroke-width="0.8"/><path d="M0.5 8.5L2.5 6.5V10.5Z M22.5 8.5L20.5 6.5V10.5Z" fill="#3b78c3"/><rect x="14.5" y="28.5" width="4" height="17" stroke="#555"/><path d="M5 28.5H13M5 45.5H13" stroke="#777" stroke-dasharray="1 1"/><path d="M4 29V35M1.5 31.5L4 29L6.5 31.5M4 39V45M1.5 42.5L4 45L6.5 42.5" stroke="#3b78c3" stroke-width="1.6"/><rect x="2.5" y="35.5" width="3" height="3" stroke="#555" stroke-width="0.8"/><rect x="2.5" y="57.5" width="18" height="4" stroke="#555"/><path d="M2.5 63V75M20.5 63V75" stroke="#777" stroke-dasharray="1 1"/><path d="M2 72H8M4.5 69.5L2 72L4.5 74.5M15 72H21M18.5 69.5L21 72L18.5 74.5" stroke="#3b78c3" stroke-width="1.6"/><rect x="10" y="70.5" width="3" height="3" stroke="#555" stroke-width="0.8"/></svg>
<div class="t" style="left:1234.00px;top:92px;font-size:14.00px;color:#262626;transform:scaleX(1.0147);transform-origin:0 0;">Columns:</div>
<div class="t" style="left:1234.00px;top:120px;font-size:14.00px;color:#262626;transform:scaleX(1.0822);transform-origin:0 0;">Height:</div>
<div class="t" style="left:1234.00px;top:149px;font-size:14.00px;color:#262626;transform:scaleX(1.0586);transform-origin:0 0;">Width:</div>
<div class="a" style="left:1301px;top:84px;width:75px;height:28px;background:#fff;border:1px solid #ababab"></div>
<div class="t" style="left:1304.50px;top:92px;font-size:14.00px;color:#262626;">1</div>
<svg class="a" style="left:1360.5px;top:89.0px" width="10" height="19" fill="none" stroke="#444" stroke-width="1.1"><path d="M1.5 4.5L5 1L8.5 4.5"/><path d="M1.5 14.5L5 18.0L8.5 14.5"/></svg>
<div class="a" style="left:1289px;top:142px;width:92px;height:29px;background:#fff;border:1px solid #ababab"></div>
<svg class="a" style="left:1364.5px;top:147.0px" width="10" height="19" fill="none" stroke="#444" stroke-width="1.1"><path d="M1.5 4.5L5 1L8.5 4.5"/><path d="M1.5 14.5L5 18.0L8.5 14.5"/></svg>
<div class="a" style="left:1289px;top:113px;width:92px;height:29px;background:#fff;border:1px solid #5c9f74"></div>
<div class="a" style="left:1359px;top:114px;width:21px;height:13px;background:#e6efe8;border-left:1px solid #5c9f74;border-bottom:1px solid #5c9f74"></div>
<div class="a" style="left:1359px;top:127px;width:1px;height:14px;background:#5c9f74"></div>
<svg class="a" style="left:1364.5px;top:117.0px" width="10" height="20" fill="none" stroke="#444" stroke-width="1.1"><path d="M1.5 4.5L5 1L8.5 4.5"/><path d="M1.5 15.5L5 19.0L8.5 15.5"/></svg>
<div class="t" style="left:1292.00px;top:120px;font-size:14.00px;color:#262626;">0.65 cm</div>
<div class="t" style="left:1270.25px;top:179px;font-size:12.50px;color:#444;">Buttons</div>
<div class="a" style="left:1390px;top:86px;width:1px;height:105px;background:#c8c8c8"></div>
<svg class="a" style="left:1403px;top:96px" width="24" height="62" fill="none"><rect x="14.5" y="2.5" width="4" height="17" stroke="#555"/><path d="M5 2.5H13M5 19.5H13" stroke="#777" stroke-dasharray="1 1"/><path d="M4 3V9M1.5 5.5L4 3L6.5 5.5M4 13V19M1.5 16.5L4 19L6.5 16.5" stroke="#3b78c3" stroke-width="1.6"/><rect x="2.5" y="9.5" width="3" height="3" stroke="#555" stroke-width="0.8"/><rect x="2.5" y="42.5" width="18" height="4" stroke="#555"/><path d="M2.5 48V60M20.5 48V60" stroke="#777" stroke-dasharray="1 1"/><path d="M2 57H8M4.5 54.5L2 57L4.5 59.5M15 57H21M18.5 54.5L21 57L18.5 59.5" stroke="#3b78c3" stroke-width="1.6"/><rect x="10" y="55.5" width="3" height="3" stroke="#555" stroke-width="0.8"/></svg>
<div class="t" style="left:1429.00px;top:102px;font-size:14.00px;color:#262626;transform:scaleX(1.0822);transform-origin:0 0;">Height:</div>
<div class="t" style="left:1429.00px;top:141px;font-size:14.00px;color:#262626;transform:scaleX(1.0586);transform-origin:0 0;">Width:</div>
<div class="a" style="left:1484px;top:94px;width:92px;height:29px;background:#fff;border:1px solid #ababab"></div>
<svg class="a" style="left:1559.5px;top:98.5px" width="10" height="19" fill="none" stroke="#444" stroke-width="1.1"><path d="M1.5 4.5L5 1L8.5 4.5"/><path d="M1.5 15.0L5 18.5L8.5 15.0"/></svg>
<div class="a" style="left:1484px;top:133px;width:92px;height:29px;background:#fff;border:1px solid #ababab"></div>
<svg class="a" style="left:1559.5px;top:137.5px" width="10" height="19" fill="none" stroke="#444" stroke-width="1.1"><path d="M1.5 4.5L5 1L8.5 4.5"/><path d="M1.5 15.0L5 18.5L8.5 15.0"/></svg>
<div class="t" style="left:1465.50px;top:179px;font-size:12.50px;color:#444;transform:scaleX(0.9047);transform-origin:0 0;">Size</div>
<svg class="a" style="left:1570px;top:179px" width="12" height="12" fill="none" stroke="#555" stroke-width="1"><path d="M1.5 8V1.5H8M3.5 3.5L10 10M10 5.5V10H5.5"/></svg>
<div class="a" style="left:1585px;top:86px;width:1px;height:105px;background:#c8c8c8"></div>
<svg class="a" style="left:1896px;top:182px" width="14" height="9" fill="none" stroke="#333" stroke-width="1.2"><path d="M1 7.5L7 1.5L13 7.5"/></svg>
<div class="a" style="left:6px;top:208px;width:127px;height:30px;background:#fff;border:1px solid #c6c6c6"></div>
<svg class="a" style="left:115px;top:219px" width="10" height="6"><path d="M0.5 0.5H9.5L5 5Z" fill="#6f6f6f"/></svg>
<svg class="a" style="left:149px;top:215px" width="5" height="15"><rect x="1" y="1" width="3" height="3" fill="#a8a8a8"/><rect x="1" y="6" width="3" height="3" fill="#a8a8a8"/><rect x="1" y="11" width="3" height="3" fill="#a8a8a8"/></svg>
<div class="a" style="left:170px;top:208px;width:137px;height:30px;background:#fff;border:1px solid #c6c6c6"></div>
<svg class="a" style="left:183px;top:214px" width="115" height="20"><path d="M2.5 2.5L15 15M15 2.5L2.5 15" stroke="#ababab" stroke-width="1.6" fill="none"/><path d="M49 9.5L54 15.5L63.5 3" stroke="#c4c4c4" stroke-width="2.6" fill="none"/></svg>
<div class="t" style="left:274px;top:211px;font-family:'Liberation Serif',serif;font-style:italic;font-weight:bold;font-size:20px;color:#5a5a5a;letter-spacing:-1px">fx</div>
<div class="a" style="left:310px;top:208px;width:1604px;height:30px;background:#fff;border:1px solid #c6c6c6"></div>
<svg class="a" style="left:1898px;top:219px" width="12" height="8"><path d="M1 1.5L5.5 6L10 1.5" stroke="#c0c0c0" stroke-width="2" fill="none"/></svg>
<div class="a" style="left:0px;top:250px;width:1895px;height:24px;background:#e6e6e6"></div>
<div class="a" style="left:0px;top:273px;width:1895px;height:1px;background:#9e9e9e"></div>
<svg class="a" style="left:0;top:250px" width="1895" height="24" shape-rendering="crispEdges"><defs><linearGradient id="cg" x1="0" y1="0" x2="0" y2="1"><stop offset="0" stop-color="#d8d8d8"/><stop offset="1" stop-color="#9c9c9c"/></linearGradient></defs><path d="M14.5 20H30V4.5Z" fill="#bcbcbc"/><rect x="33" y="3" width="1" height="20" fill="url(#cg)"/><rect x="146" y="3" width="1" height="20" fill="url(#cg)"/><rect x="283" y="3" width="1" height="20" fill="url(#cg)"/><rect x="363" y="3" width="1" height="20" fill="url(#cg)"/><rect x="443" y="3" width="1" height="20" fill="url(#cg)"/><rect x="523" y="3" width="1" height="20" fill="url(#cg)"/><rect x="603" y="3" width="1" height="20" fill="url(#cg)"/><rect x="683" y="3" width="1" height="20" fill="url(#cg)"/><rect x="763" y="3" width="1" height="20" fill="url(#cg)"/><rect x="843" y="3" width="1" height="20" fill="url(#cg)"/><rect x="923" y="3" width="1" height="20" fill="url(#cg)"/><rect x="1003" y="3" width="1" height="20" fill="url(#cg)"/><rect x="1083" y="3" width="1" height="20" fill="url(#cg)"/><rect x="1163" y="3" width="1" height="20" fill="url(#cg)"/><rect x="1243" y="3" width="1" height="20" fill="url(#cg)"/><rect x="1323" y="3" width="1" height="20" fill="url(#cg)"/><rect x="1403" y="3" width="1" height="20" fill="url(#cg)"/><rect x="1483" y="3" width="1" height="20" fill="url(#cg)"/><rect x="1563" y="3" width="1" height="20" fill="url(#cg)"/><rect x="1643" y="3" width="1" height="20" fill="url(#cg)"/><rect x="1723" y="3" width="1" height="20" fill="url(#cg)"/><rect x="1803" y="3" width="1" height="20" fill="url(#cg)"/><rect x="1883" y="3" width="1" height="20" fill="url(#cg)"/></svg>
<div class="t" style="left:85.16px;top:255px;font-size:16.00px;color:#262626;">A</div>
<div class="t" style="left:210.16px;top:255px;font-size:16.00px;color:#262626;">B</div>
<div class="t" style="left:318.22px;top:255px;font-size:16.00px;color:#262626;">C</div>
<div class="t" style="left:398.22px;top:255px;font-size:16.00px;color:#262626;">D</div>
<div class="t" style="left:478.66px;top:255px;font-size:16.00px;color:#262626;">E</div>
<div class="t" style="left:559.11px;top:255px;font-size:16.00px;color:#262626;">F</div>
<div class="t" style="left:637.78px;top:255px;font-size:16.00px;color:#262626;">G</div>
<div class="t" style="left:718.22px;top:255px;font-size:16.00px;color:#262626;">H</div>
<div class="t" style="left:801.78px;top:255px;font-size:16.00px;color:#262626;">I</div>
<div class="t" style="left:880.00px;top:255px;font-size:16.00px;color:#262626;">J</div>
<div class="t" style="left:958.66px;top:255px;font-size:16.00px;color:#262626;">K</div>
<div class="t" style="left:1039.55px;top:255px;font-size:16.00px;color:#262626;">L</div>
<div class="t" style="left:1117.34px;top:255px;font-size:16.00px;color:#262626;">M</div>
<div class="t" style="left:1198.22px;top:255px;font-size:16.00px;color:#262626;">N</div>
<div class="t" style="left:1277.78px;top:255px;font-size:16.00px;color:#262626;">O</div>
<div class="t" style="left:1358.66px;top:255px;font-size:16.00px;color:#262626;">P</div>
<div class="t" style="left:1437.78px;top:255px;font-size:16.00px;color:#262626;">Q</div>
<div class="t" style="left:1518.22px;top:255px;font-size:16.00px;color:#262626;">R</div>
<div class="t" style="left:1598.66px;top:255px;font-size:16.00px;color:#262626;">S</div>
<div class="t" style="left:1679.11px;top:255px;font-size:16.00px;color:#262626;">T</div>
<div class="t" style="left:1758.22px;top:255px;font-size:16.00px;color:#262626;">U</div>
<div class="t" style="left:1838.66px;top:255px;font-size:16.00px;color:#262626;">V</div>
<div class="a" style="left:0px;top:274px;width:34px;height:688px;background:#e6e6e6"></div>
<div class="a" style="left:33px;top:274px;width:1px;height:688px;background:#9e9e9e"></div>
<svg class="a" style="left:0;top:274px" width="1895" height="688" shape-rendering="crispEdges"><rect x="34" y="0" width="1861" height="688" fill="#fff"/><line x1="0" y1="23.5" x2="33" y2="23.5" stroke="#a8a8a8"/><line x1="34" y1="23.5" x2="1894" y2="23.5" stroke="#d4d4d4"/><line x1="0" y1="47.5" x2="33" y2="47.5" stroke="#a8a8a8"/><line x1="34" y1="47.5" x2="1894" y2="47.5" stroke="#d4d4d4"/><line x1="0" y1="71.5" x2="33" y2="71.5" stroke="#a8a8a8"/><line x1="34" y1="71.5" x2="1894" y2="71.5" stroke="#d4d4d4"/><line x1="0" y1="95.5" x2="33" y2="95.5" stroke="#a8a8a8"/><line x1="34" y1="95.5" x2="1894" y2="95.5" stroke="#d4d4d4"/><line x1="0" y1="119.5" x2="33" y2="119.5" stroke="#a8a8a8"/><line x1="34" y1="119.5" x2="1894" y2="119.5" stroke="#d4d4d4"/><line x1="0" y1="143.5" x2="33" y2="143.5" stroke="#a8a8a8"/><line x1="34" y1="143.5" x2="1894" y2="143.5" stroke="#d4d4d4"/><line x1="0" y1="167.5" x2="33" y2="167.5" stroke="#a8a8a8"/><line x1="34" y1="167.5" x2="1894" y2="167.5" stroke="#d4d4d4"/><line x1="0" y1="191.5" x2="33" y2="191.5" stroke="#a8a8a8"/><line x1="34" y1="191.5" x2="1894" y2="191.5" stroke="#d4d4d4"/><line x1="0" y1="215.5" x2="33" y2="215.5" stroke="#a8a8a8"/><line x1="34" y1="215.5" x2="1894" y2="215.5" stroke="#d4d4d4"/><line x1="0" y1="239.5" x2="33" y2="239.5" stroke="#a8a8a8"/><line x1="34" y1="239.5" x2="1894" y2="239.5" stroke="#d4d4d4"/><line x1="0" y1="263.5" x2="33" y2="263.5" stroke="#a8a8a8"/><line x1="34" y1="263.5" x2="1894" y2="263.5" stroke="#d4d4d4"/><line x1="0" y1="287.5" x2="33" y2="287.5" stroke="#a8a8a8"/><line x1="34" y1="287.5" x2="1894" y2="287.5" stroke="#d4d4d4"/><line x1="0" y1="311.5" x2="33" y2="311.5" stroke="#a8a8a8"/><line x1="34" y1="311.5" x2="1894" y2="311.5" stroke="#d4d4d4"/><line x1="0" y1="335.5" x2="33" y2="335.5" stroke="#a8a8a8"/><line x1="34" y1="335.5" x2="1894" y2="335.5" stroke="#d4d4d4"/><line x1="0" y1="359.5" x2="33" y2="359.5" stroke="#a8a8a8"/><line x1="34" y1="359.5" x2="1894" y2="359.5" stroke="#d4d4d4"/><line x1="0" y1="383.5" x2="33" y2="383.5" stroke="#a8a8a8"/><line x1="34" y1="383.5" x2="1894" y2="383.5" stroke="#d4d4d4"/><line x1="0" y1="407.5" x2="33" y2="407.5" stroke="#a8a8a8"/><line x1="34" y1="407.5" x2="1894" y2="407.5" stroke="#d4d4d4"/><line x1="0" y1="431.5" x2="33" y2="431.5" stroke="#a8a8a8"/><line x1="34" y1="431.5" x2="1894" y2="431.5" stroke="#d4d4d4"/><line x1="0" y1="455.5" x2="33" y2="455.5" stroke="#a8a8a8"/><line x1="34" y1="455.5" x2="1894" y2="455.5" stroke="#d4d4d4"/><line x1="0" y1="479.5" x2="33" y2="479.5" stroke="#a8a8a8"/><line x1="34" y1="479.5" x2="1894" y2="479.5" stroke="#d4d4d4"/><line x1="0" y1="503.5" x2="33" y2="503.5" stroke="#a8a8a8"/><line x1="34" y1="503.5" x2="1894" y2="503.5" stroke="#d4d4d4"/><line x1="0" y1="527.5" x2="33" y2="527.5" stroke="#a8a8a8"/><line x1="34" y1="527.5" x2="1894" y2="527.5" stroke="#d4d4d4"/><line x1="0" y1="551.5" x2="33" y2="551.5" stroke="#a8a8a8"/><line x1="34" y1="551.5" x2="1894" y2="551.5" stroke="#d4d4d4"/><line x1="0" y1="575.5" x2="33" y2="575.5" stroke="#a8a8a8"/><line x1="34" y1="575.5" x2="1894" y2="575.5" stroke="#d4d4d4"/><line x1="0" y1="599.5" x2="33" y2="599.5" stroke="#a8a8a8"/><line x1="34" y1="599.5" x2="1894" y2="599.5" stroke="#d4d4d4"/><line x1="0" y1="623.5" x2="33" y2="623.5" stroke="#a8a8a8"/><line x1="34" y1="623.5" x2="1894" y2="623.5" stroke="#d4d4d4"/><line x1="0" y1="647.5" x2="33" y2="647.5" stroke="#a8a8a8"/><line x1="34" y1="647.5" x2="1894" y2="647.5" stroke="#d4d4d4"/><line x1="0" y1="671.5" x2="33" y2="671.5" stroke="#a8a8a8"/><line x1="34" y1="671.5" x2="1894" y2="671.5" stroke="#d4d4d4"/><line x1="0" y1="695.5" x2="33" y2="695.5" stroke="#a8a8a8"/><line x1="34" y1="695.5" x2="1894" y2="695.5" stroke="#d4d4d4"/><line x1="146.5" y1="0" x2="146.5" y2="688" stroke="#d4d4d4"/><line x1="283.5" y1="0" x2="283.5" y2="688" stroke="#d4d4d4"/><line x1="363.5" y1="0" x2="363.5" y2="688" stroke="#d4d4d4"/><line x1="443.5" y1="0" x2="443.5" y2="688" stroke="#d4d4d4"/><line x1="523.5" y1="0" x2="523.5" y2="688" stroke="#d4d4d4"/><line x1="603.5" y1="0" x2="603.5" y2="688" stroke="#d4d4d4"/><line x1="683.5" y1="0" x2="683.5" y2="688" stroke="#d4d4d4"/><line x1="763.5" y1="0" x2="763.5" y2="688" stroke="#d4d4d4"/><line x1="843.5" y1="0" x2="843.5" y2="688" stroke="#d4d4d4"/><line x1="923.5" y1="0" x2="923.5" y2="688" stroke="#d4d4d4"/><line x1="1003.5" y1="0" x2="1003.5" y2="688" stroke="#d4d4d4"/><line x1="1083.5" y1="0" x2="1083.5" y2="688" stroke="#d4d4d4"/><line x1="1163.5" y1="0" x2="1163.5" y2="688" stroke="#d4d4d4"/><line x1="1243.5" y1="0" x2="1243.5" y2="688" stroke="#d4d4d4"/><line x1="1323.5" y1="0" x2="1323.5" y2="688" stroke="#d4d4d4"/><line x1="1403.5" y1="0" x2="1403.5" y2="688" stroke="#d4d4d4"/><line x1="1483.5" y1="0" x2="1483.5" y2="688" stroke="#d4d4d4"/><line x1="1563.5" y1="0" x2="1563.5" y2="688" stroke="#d4d4d4"/><line x1="1643.5" y1="0" x2="1643.5" y2="688" stroke="#d4d4d4"/><line x1="1723.5" y1="0" x2="1723.5" y2="688" stroke="#d4d4d4"/><line x1="1803.5" y1="0" x2="1803.5" y2="688" stroke="#d4d4d4"/><line x1="1883.5" y1="0" x2="1883.5" y2="688" stroke="#d4d4d4"/><line x1="1894.5" y1="0" x2="1894.5" y2="688" stroke="#ababab"/><line x1="0" y1="687.5" x2="1895" y2="687.5" stroke="#ababab"/></svg>
<div class="t" style="left:12.55px;top:279px;font-size:16.00px;color:#262626;">1</div>
<div class="t" style="left:12.55px;top:303px;font-size:16.00px;color:#262626;">2</div>
<div class="t" style="left:12.55px;top:327px;font-size:16.00px;color:#262626;">3</div>
<div class="t" style="left:12.55px;top:351px;font-size:16.00px;color:#262626;">4</div>
<div class="t" style="left:12.55px;top:375px;font-size:16.00px;color:#262626;">5</div>
<div class="t" style="left:12.55px;top:399px;font-size:16.00px;color:#262626;">6</div>
<div class="t" style="left:12.55px;top:423px;font-size:16.00px;color:#262626;">7</div>
<div class="t" style="left:12.55px;top:447px;font-size:16.00px;color:#262626;">8</div>
<div class="t" style="left:12.55px;top:471px;font-size:16.00px;color:#262626;">9</div>
<div class="t" style="left:8.10px;top:495px;font-size:16.00px;color:#262626;">10</div>
<div class="t" style="left:8.70px;top:519px;font-size:16.00px;color:#262626;">11</div>
<div class="t" style="left:8.10px;top:543px;font-size:16.00px;color:#262626;">12</div>
<div class="t" style="left:8.10px;top:567px;font-size:16.00px;color:#262626;">13</div>
<div class="t" style="left:8.10px;top:591px;font-size:16.00px;color:#262626;">14</div>
<div class="t" style="left:8.10px;top:615px;font-size:16.00px;color:#262626;">15</div>
<div class="t" style="left:8.10px;top:639px;font-size:16.00px;color:#262626;">16</div>
<div class="t" style="left:8.10px;top:663px;font-size:16.00px;color:#262626;">17</div>
<div class="t" style="left:8.10px;top:687px;font-size:16.00px;color:#262626;">18</div>
<div class="t" style="left:8.10px;top:711px;font-size:16.00px;color:#262626;">19</div>
<div class="t" style="left:8.10px;top:735px;font-size:16.00px;color:#262626;">20</div>
<div class="t" style="left:8.10px;top:759px;font-size:16.00px;color:#262626;">21</div>
<div class="t" style="left:8.10px;top:783px;font-size:16.00px;color:#262626;">22</div>
<div class="t" style="left:8.10px;top:807px;font-size:16.00px;color:#262626;">23</div>
<div class="t" style="left:8.10px;top:831px;font-size:16.00px;color:#262626;">24</div>
<div class="t" style="left:8.10px;top:855px;font-size:16.00px;color:#262626;">25</div>
<div class="t" style="left:8.10px;top:879px;font-size:16.00px;color:#262626;">26</div>
<div class="t" style="left:8.10px;top:903px;font-size:16.00px;color:#262626;">27</div>
<div class="t" style="left:8.10px;top:927px;font-size:16.00px;color:#262626;">28</div>
<div class="t" style="left:8.10px;top:951px;font-size:16.00px;color:#262626;">29</div>
<div class="a" style="left:34px;top:274px;width:249px;height:407px;background:#fff"></div>
<div class="a" style="left:146px;top:322px;width:1px;height:24px;background:#d4d4d4"></div>
<div class="a" style="left:34px;top:345px;width:249px;height:1px;background:#d4d4d4"></div>
<div class="a" style="left:34px;top:321px;width:249px;height:1px;background:#d4d4d4"></div>
<div class="a" style="left:34px;top:274px;width:249px;height:47px;background:#d9e1f2"></div>
<div class="a" style="left:34px;top:321px;width:249px;height:1px;background:#8ea9db"></div>
<div class="a" style="left:34px;top:346px;width:249px;height:23px;background:#d9e1f2"></div>
<div class="a" style="left:34px;top:369px;width:249px;height:1px;background:#8ea9db"></div>
<div class="a" style="left:34px;top:393px;width:249px;height:1px;background:#8ea9db"></div>
<div class="a" style="left:34px;top:465px;width:249px;height:1px;background:#8ea9db"></div>
<div class="a" style="left:34px;top:537px;width:249px;height:1px;background:#8ea9db"></div>
<div class="a" style="left:34px;top:609px;width:249px;height:1px;background:#8ea9db"></div>
<div class="a" style="left:34px;top:657px;width:249px;height:1px;background:#8ea9db"></div>
<div class="a" style="left:34px;top:658px;width:249px;height:24px;background:#d9e1f2"></div>
<div class="a" style="left:34px;top:681px;width:249px;height:1px;background:#d4d4d4"></div>
<div class="a" style="left:262px;top:276px;width:21px;height:20px;background:#f9f9f9;border:1px solid #c3c3c3"></div>
<svg class="a" style="left:269px;top:284px" width="8" height="5"><path d="M0 0.5H7.5L3.75 4.5Z" fill="#606060"/></svg>
<div class="a" style="left:262px;top:299px;width:21px;height:20px;background:#f9f9f9;border:1px solid #c3c3c3"></div>
<svg class="a" style="left:269px;top:307px" width="8" height="5"><path d="M0 0.5H7.5L3.75 4.5Z" fill="#606060"/></svg>
<div class="a" style="left:125px;top:347px;width:21px;height:21px;background:#f9f9f9;border:1px solid #c3c3c3"></div>
<svg class="a" style="left:132px;top:355px" width="8" height="5"><path d="M0 0.5H7.5L3.75 4.5Z" fill="#606060"/></svg>
<div class="t" style="left:37.00px;top:279px;font-size:16.00px;color:#000000;">Sales Month</div>
<div class="t" style="left:150.00px;top:279px;font-size:16.00px;color:#000000;transform:scaleX(0.9846);transform-origin:0 0;">(All)</div>
<div class="t" style="left:37.00px;top:303px;font-size:16.00px;color:#000000;transform:scaleX(1.0137);transform-origin:0 0;">Products</div>
<div class="t" style="left:150.00px;top:303px;font-size:16.00px;color:#000000;transform:scaleX(0.9846);transform-origin:0 0;">(All)</div>
<div class="t" style="left:37.00px;top:351px;font-size:15.50px;color:#000000;font-weight:bold;transform:scaleX(0.9754);transform-origin:0 0;">Row Labels</div>
<div class="t" style="left:150.00px;top:351px;font-size:15.50px;color:#000000;font-weight:bold;">Sum of Net Sales</div>
<svg class="a" style="left:41px;top:377px" width="12" height="12"><rect x="0.5" y="0.5" width="11" height="10" rx="1.5" fill="#f2f2f2" stroke="#9a9a9a"/><line x1="3" y1="5.5" x2="9" y2="5.5" stroke="#555" stroke-width="1.2"/></svg>
<div class="t" style="left:55.00px;top:375px;font-size:15.50px;color:#000000;font-weight:bold;">East</div>
<div class="t" style="left:219.16px;top:375px;font-size:15.50px;color:#000000;font-weight:bold;">1312745</div>
<div class="t" style="left:73.00px;top:399px;font-size:16.00px;color:#000000;">2015</div>
<div class="t" style="left:226.12px;top:399px;font-size:16.00px;color:#000000;">465951</div>
<div class="t" style="left:73.00px;top:423px;font-size:16.00px;color:#000000;">2016</div>
<div class="t" style="left:226.12px;top:423px;font-size:16.00px;color:#000000;">846794</div>
<svg class="a" style="left:41px;top:449px" width="12" height="12"><rect x="0.5" y="0.5" width="11" height="10" rx="1.5" fill="#f2f2f2" stroke="#9a9a9a"/><line x1="3" y1="5.5" x2="9" y2="5.5" stroke="#555" stroke-width="1.2"/></svg>
<div class="t" style="left:55.00px;top:447px;font-size:15.50px;color:#000000;font-weight:bold;">North</div>
<div class="t" style="left:219.16px;top:447px;font-size:15.50px;color:#000000;font-weight:bold;">1005751</div>
<div class="t" style="left:73.00px;top:471px;font-size:16.00px;color:#000000;">2015</div>
<div class="t" style="left:227.30px;top:471px;font-size:16.00px;color:#000000;">112847</div>
<div class="t" style="left:73.00px;top:495px;font-size:16.00px;color:#000000;">2016</div>
<div class="t" style="left:226.12px;top:495px;font-size:16.00px;color:#000000;">892904</div>
<svg class="a" style="left:41px;top:521px" width="12" height="12"><rect x="0.5" y="0.5" width="11" height="10" rx="1.5" fill="#f2f2f2" stroke="#9a9a9a"/><line x1="3" y1="5.5" x2="9" y2="5.5" stroke="#555" stroke-width="1.2"/></svg>
<div class="t" style="left:55.00px;top:519px;font-size:15.50px;color:#000000;font-weight:bold;">South</div>
<div class="t" style="left:219.16px;top:519px;font-size:15.50px;color:#000000;font-weight:bold;">1053709</div>
<div class="t" style="left:73.00px;top:543px;font-size:16.00px;color:#000000;">2015</div>
<div class="t" style="left:226.12px;top:543px;font-size:16.00px;color:#000000;">105237</div>
<div class="t" style="left:73.00px;top:567px;font-size:16.00px;color:#000000;">2016</div>
<div class="t" style="left:226.12px;top:567px;font-size:16.00px;color:#000000;">948472</div>
<svg class="a" style="left:41px;top:593px" width="12" height="12"><rect x="0.5" y="0.5" width="11" height="10" rx="1.5" fill="#f2f2f2" stroke="#9a9a9a"/><line x1="3" y1="5.5" x2="9" y2="5.5" stroke="#555" stroke-width="1.2"/></svg>
<div class="t" style="left:55.00px;top:591px;font-size:15.50px;color:#000000;font-weight:bold;">West</div>
<div class="t" style="left:227.78px;top:591px;font-size:15.50px;color:#000000;font-weight:bold;">780088</div>
<div class="t" style="left:73.00px;top:615px;font-size:16.00px;color:#000000;">2015</div>
<div class="t" style="left:235.01px;top:615px;font-size:16.00px;color:#000000;">57301</div>
<div class="t" style="left:73.00px;top:639px;font-size:16.00px;color:#000000;">2016</div>
<div class="t" style="left:226.12px;top:639px;font-size:16.00px;color:#000000;">722787</div>
<div class="t" style="left:37.00px;top:663px;font-size:15.50px;color:#000000;font-weight:bold;transform:scaleX(1.0254);transform-origin:0 0;">Grand Total</div>
<div class="t" style="left:219.16px;top:663px;font-size:15.50px;color:#000000;font-weight:bold;">4152293</div>
<div class="a" style="left:360px;top:290px;width:320px;height:370px;background:#fff"></div>
<div class="a" style="left:359px;top:289px;width:321px;height:370px;border:1px solid #4472c4"></div>
<div class="a" style="left:360px;top:290px;width:321px;height:371px;border:1px solid #5f5f5f;border-top-color:#5f5f5f"></div>
<div class="a" style="left:360px;top:289px;width:320px;height:1px;background:#4472c4"></div>
<div class="t" style="left:370.00px;top:298px;font-size:15.50px;color:#000;font-weight:bold;">Salesman</div>
<svg class="a" style="left:606.0px;top:294.0px" width="20" height="20" fill="none" stroke="#5a5a5a" stroke-width="1.2"><path d="M0.8 2.8L2.8 5L6.5 0.8M0.8 8.8L2.8 11L6.5 6.8M0.8 14.8L2.8 17L6.5 12.8"/><path d="M8 2.5H18M8 8.5H18M8 14.5H18" stroke="#6a6a6a"/></svg>
<svg class="a" style="left:645.0px;top:294.0px" width="21" height="21"><path d="M0 0H14.5L9 5.8V12.8H5.5V5.8Z" fill="#a9a9a9"/><path d="M6.6 6.3V11.8H8V6.3Z" fill="#fff"/><path d="M9.3 10L18.3 19M18.3 10L9.3 19" stroke="#a0a0a0" stroke-width="2"/></svg>
<div class="a" style="left:370px;top:321px;width:298px;height:1px;background:#4472c4"></div>
<div class="a" style="left:370px;top:327px;width:298px;height:31px;background:#b4c6e7;border:1px solid #8f8f8f;border-radius:3px"></div>
<div class="t" style="left:381.00px;top:335px;font-size:16.00px;color:#000;">Jack</div>
<div class="a" style="left:370px;top:362px;width:298px;height:31px;background:#b4c6e7;border:1px solid #8f8f8f;border-radius:3px"></div>
<div class="t" style="left:381.00px;top:370px;font-size:16.00px;color:#000;">Leo</div>
<div class="a" style="left:370px;top:397px;width:298px;height:31px;background:#b4c6e7;border:1px solid #8f8f8f;border-radius:3px"></div>
<div class="t" style="left:381.00px;top:405px;font-size:16.00px;color:#000;">Robert</div>
<div class="a" style="left:370px;top:432px;width:298px;height:31px;background:#b4c6e7;border:1px solid #8f8f8f;border-radius:3px"></div>
<div class="t" style="left:381.00px;top:440px;font-size:16.00px;color:#000;">Robin</div>
<div class="a" style="left:370px;top:467px;width:298px;height:31px;background:#b4c6e7;border:1px solid #8f8f8f;border-radius:3px"></div>
<div class="t" style="left:381.00px;top:475px;font-size:16.00px;color:#000;">Ronaldo</div>
<div class="a" style="left:370px;top:502px;width:298px;height:31px;background:#b4c6e7;border:1px solid #8f8f8f;border-radius:3px"></div>
<div class="t" style="left:381.00px;top:510px;font-size:16.00px;color:#000;">Samuel</div>
<div class="a" style="left:370px;top:537px;width:298px;height:31px;background:#b4c6e7;border:1px solid #8f8f8f;border-radius:3px"></div>
<div class="t" style="left:381.00px;top:545px;font-size:16.00px;color:#000;">Sebastian</div>
<div class="a" style="left:370px;top:572px;width:298px;height:31px;background:#b4c6e7;border:1px solid #8f8f8f;border-radius:3px"></div>
<div class="t" style="left:381.00px;top:580px;font-size:16.00px;color:#000;">Steve</div>
<div class="a" style="left:370px;top:607px;width:298px;height:31px;background:#b4c6e7;border:1px solid #8f8f8f;border-radius:3px"></div>
<div class="t" style="left:381.00px;top:615px;font-size:16.00px;color:#000;">Yash</div>
<svg class="a" style="left:0;top:0;overflow:visible" width="1" height="1"><circle cx="360.5" cy="290.5" r="6" fill="#fff" stroke="#5e5e5e" stroke-width="2.1"/><circle cx="520.5" cy="290.5" r="6" fill="#fff" stroke="#5e5e5e" stroke-width="2.1"/><circle cx="680.5" cy="290.5" r="6" fill="#fff" stroke="#5e5e5e" stroke-width="2.1"/><circle cx="360.5" cy="475.0" r="6" fill="#fff" stroke="#5e5e5e" stroke-width="2.1"/><circle cx="680.5" cy="475.0" r="6" fill="#fff" stroke="#5e5e5e" stroke-width="2.1"/><circle cx="360.5" cy="660.5" r="6" fill="#fff" stroke="#5e5e5e" stroke-width="2.1"/><circle cx="520.5" cy="660.5" r="6" fill="#fff" stroke="#5e5e5e" stroke-width="2.1"/><circle cx="680.5" cy="660.5" r="6" fill="#fff" stroke="#5e5e5e" stroke-width="2.1"/></svg>
<div class="a" style="left:704px;top:290px;width:316px;height:439px;background:#fff"></div>
<div class="a" style="left:703px;top:289px;width:317px;height:439px;border:1px solid #4472c4"></div>
<div class="a" style="left:704px;top:290px;width:317px;height:440px;border:1px solid #5f5f5f;border-top-color:#5f5f5f"></div>
<div class="a" style="left:704px;top:289px;width:316px;height:1px;background:#4472c4"></div>
<div class="t" style="left:714.50px;top:298px;font-size:15.50px;color:#000;font-weight:bold;">Products</div>
<svg class="a" style="left:946.0px;top:294.0px" width="20" height="20" fill="none" stroke="#5a5a5a" stroke-width="1.2"><path d="M0.8 2.8L2.8 5L6.5 0.8M0.8 8.8L2.8 11L6.5 6.8M0.8 14.8L2.8 17L6.5 12.8"/><path d="M8 2.5H18M8 8.5H18M8 14.5H18" stroke="#6a6a6a"/></svg>
<svg class="a" style="left:985.0px;top:294.0px" width="21" height="21"><path d="M0 0H14.5L9 5.8V12.8H5.5V5.8Z" fill="#a9a9a9"/><path d="M6.6 6.3V11.8H8V6.3Z" fill="#fff"/><path d="M9.3 10L18.3 19M18.3 10L9.3 19" stroke="#a0a0a0" stroke-width="2"/></svg>
<div class="a" style="left:714px;top:321px;width:294px;height:1px;background:#4472c4"></div>
<div class="a" style="left:714px;top:327px;width:294px;height:31px;background:#b4c6e7;border:1px solid #8f8f8f;border-radius:3px"></div>
<div class="t" style="left:725.00px;top:335px;font-size:16.00px;color:#000;">Auto</div>
<div class="a" style="left:714px;top:362px;width:294px;height:31px;background:#b4c6e7;border:1px solid #8f8f8f;border-radius:3px"></div>
<div class="t" style="left:725.00px;top:370px;font-size:16.00px;color:#000;">Bicycles</div>
<div class="a" style="left:714px;top:397px;width:294px;height:31px;background:#b4c6e7;border:1px solid #8f8f8f;border-radius:3px"></div>
<div class="t" style="left:725.00px;top:405px;font-size:16.00px;color:#000;">Cars</div>
<div class="a" style="left:714px;top:432px;width:294px;height:31px;background:#b4c6e7;border:1px solid #8f8f8f;border-radius:3px"></div>
<div class="t" style="left:725.00px;top:440px;font-size:16.00px;color:#000;">Metro</div>
<div class="a" style="left:714px;top:467px;width:294px;height:31px;background:#b4c6e7;border:1px solid #8f8f8f;border-radius:3px"></div>
<div class="t" style="left:725.00px;top:475px;font-size:16.00px;color:#000;">Motorbikes</div>
<div class="a" style="left:714px;top:502px;width:294px;height:31px;background:#b4c6e7;border:1px solid #8f8f8f;border-radius:3px"></div>
<div class="t" style="left:725.00px;top:510px;font-size:16.00px;color:#000;">Rickshaw</div>
<div class="a" style="left:714px;top:537px;width:294px;height:31px;background:#b4c6e7;border:1px solid #8f8f8f;border-radius:3px"></div>
<div class="t" style="left:725.00px;top:545px;font-size:16.00px;color:#000;">Scooter</div>
<div class="a" style="left:714px;top:572px;width:294px;height:31px;background:#b4c6e7;border:1px solid #8f8f8f;border-radius:3px"></div>
<div class="t" style="left:725.00px;top:580px;font-size:16.00px;color:#000;">Train</div>
<div class="a" style="left:714px;top:607px;width:294px;height:31px;background:#b4c6e7;border:1px solid #8f8f8f;border-radius:3px"></div>
<div class="t" style="left:725.00px;top:615px;font-size:16.00px;color:#000;">Tram</div>
<div class="a" style="left:714px;top:642px;width:294px;height:31px;background:#b4c6e7;border:1px solid #8f8f8f;border-radius:3px"></div>
<div class="t" style="left:725.00px;top:650px;font-size:16.00px;color:#000;">Trucks</div>
<div class="a" style="left:714px;top:677px;width:294px;height:31px;background:#b4c6e7;border:1px solid #8f8f8f;border-radius:3px"></div>
<div class="t" style="left:725.00px;top:685px;font-size:16.00px;color:#000;">Van</div>
<svg class="a" style="left:0;top:0;overflow:visible" width="1" height="1"><circle cx="704.5" cy="290.5" r="6" fill="#fff" stroke="#5e5e5e" stroke-width="2.1"/><circle cx="862.5" cy="290.5" r="6" fill="#fff" stroke="#5e5e5e" stroke-width="2.1"/><circle cx="1020.5" cy="290.5" r="6" fill="#fff" stroke="#5e5e5e" stroke-width="2.1"/><circle cx="704.5" cy="509.5" r="6" fill="#fff" stroke="#5e5e5e" stroke-width="2.1"/><circle cx="1020.5" cy="509.5" r="6" fill="#fff" stroke="#5e5e5e" stroke-width="2.1"/><circle cx="704.5" cy="729.5" r="6" fill="#fff" stroke="#5e5e5e" stroke-width="2.1"/><circle cx="862.5" cy="729.5" r="6" fill="#fff" stroke="#5e5e5e" stroke-width="2.1"/><circle cx="1020.5" cy="729.5" r="6" fill="#fff" stroke="#5e5e5e" stroke-width="2.1"/></svg>
<div class="a" style="left:1034px;top:288px;width:251px;height:209px;background:#fff"></div>
<div class="a" style="left:1033px;top:287px;width:252px;height:209px;border:1px solid #4472c4"></div>
<div class="a" style="left:1034px;top:288px;width:252px;height:210px;border:1px solid #5f5f5f;border-top-color:#5f5f5f"></div>
<div class="a" style="left:1034px;top:287px;width:251px;height:1px;background:#4472c4"></div>
<div class="t" style="left:1044.40px;top:297px;font-size:15.50px;color:#000;font-weight:bold;">Zone</div>
<svg class="a" style="left:1211.0px;top:294.0px" width="20" height="20" fill="none" stroke="#5a5a5a" stroke-width="1.2"><path d="M0.8 2.8L2.8 5L6.5 0.8M0.8 8.8L2.8 11L6.5 6.8M0.8 14.8L2.8 17L6.5 12.8"/><path d="M8 2.5H18M8 8.5H18M8 14.5H18" stroke="#6a6a6a"/></svg>
<svg class="a" style="left:1250.0px;top:294.0px" width="21" height="21"><path d="M0 0H14.5L9 5.8V12.8H5.5V5.8Z" fill="#a9a9a9"/><path d="M6.6 6.3V11.8H8V6.3Z" fill="#fff"/><path d="M9.3 10L18.3 19M18.3 10L9.3 19" stroke="#a0a0a0" stroke-width="2"/></svg>
<div class="a" style="left:1044px;top:320px;width:229px;height:1px;background:#4472c4"></div>
<div class="a" style="left:1044px;top:326px;width:229px;height:31px;background:#b4c6e7;border:1px solid #8f8f8f;border-radius:3px"></div>
<div class="t" style="left:1055.00px;top:334px;font-size:16.00px;color:#000;">East</div>
<div class="a" style="left:1044px;top:361px;width:229px;height:31px;background:#b4c6e7;border:1px solid #8f8f8f;border-radius:3px"></div>
<div class="t" style="left:1055.00px;top:369px;font-size:16.00px;color:#000;">North</div>
<div class="a" style="left:1044px;top:396px;width:229px;height:31px;background:#b4c6e7;border:1px solid #8f8f8f;border-radius:3px"></div>
<div class="t" style="left:1055.00px;top:404px;font-size:16.00px;color:#000;">South</div>
<div class="a" style="left:1044px;top:431px;width:229px;height:31px;background:#b4c6e7;border:1px solid #8f8f8f;border-radius:3px"></div>
<div class="t" style="left:1055.00px;top:439px;font-size:16.00px;color:#000;">West</div>
<svg class="a" style="left:0;top:0;overflow:visible" width="1" height="1"><circle cx="1034.5" cy="288.5" r="6" fill="#fff" stroke="#5e5e5e" stroke-width="2.1"/><circle cx="1160.0" cy="288.5" r="6" fill="#fff" stroke="#5e5e5e" stroke-width="2.1"/><circle cx="1285.5" cy="288.5" r="6" fill="#fff" stroke="#5e5e5e" stroke-width="2.1"/><circle cx="1034.5" cy="392.5" r="6" fill="#fff" stroke="#5e5e5e" stroke-width="2.1"/><circle cx="1285.5" cy="392.5" r="6" fill="#fff" stroke="#5e5e5e" stroke-width="2.1"/><circle cx="1034.5" cy="497.5" r="6" fill="#fff" stroke="#5e5e5e" stroke-width="2.1"/><circle cx="1160.0" cy="497.5" r="6" fill="#fff" stroke="#5e5e5e" stroke-width="2.1"/><circle cx="1285.5" cy="497.5" r="6" fill="#fff" stroke="#5e5e5e" stroke-width="2.1"/></svg>
<div class="a" style="left:1306px;top:286px;width:288px;height:460px;background:#fff"></div>
<div class="a" style="left:1305px;top:285px;width:289px;height:460px;border:1px solid #4472c4"></div>
<div class="a" style="left:1306px;top:286px;width:289px;height:461px;border:1px solid #5f5f5f;border-top-color:#5f5f5f"></div>
<div class="a" style="left:1306px;top:285px;width:288px;height:1px;background:#4472c4"></div>
<div class="t" style="left:1316.00px;top:294px;font-size:15.50px;color:#000;font-weight:bold;">Sales Month</div>
<svg class="a" style="left:1520.0px;top:291.0px" width="20" height="20" fill="none" stroke="#5a5a5a" stroke-width="1.2"><path d="M0.8 2.8L2.8 5L6.5 0.8M0.8 8.8L2.8 11L6.5 6.8M0.8 14.8L2.8 17L6.5 12.8"/><path d="M8 2.5H18M8 8.5H18M8 14.5H18" stroke="#6a6a6a"/></svg>
<svg class="a" style="left:1559.0px;top:291.0px" width="21" height="21"><path d="M0 0H14.5L9 5.8V12.8H5.5V5.8Z" fill="#a9a9a9"/><path d="M6.6 6.3V11.8H8V6.3Z" fill="#fff"/><path d="M9.3 10L18.3 19M18.3 10L9.3 19" stroke="#a0a0a0" stroke-width="2"/></svg>
<div class="a" style="left:1316px;top:317px;width:266px;height:1px;background:#4472c4"></div>
<div class="a" style="left:1316px;top:323px;width:240px;height:410px;overflow:hidden"><div class="a" style="left:0px;top:0px;width:239px;height:31px;background:#b4c6e7;border:1px solid #8f8f8f;border-radius:3px"></div>
<div class="t" style="left:11.00px;top:8px;font-size:16.00px;color:#000;">January</div>
<div class="a" style="left:0px;top:35px;width:239px;height:31px;background:#b4c6e7;border:1px solid #8f8f8f;border-radius:3px"></div>
<div class="t" style="left:11.00px;top:43px;font-size:16.00px;color:#000;">February</div>
<div class="a" style="left:0px;top:70px;width:239px;height:31px;background:#b4c6e7;border:1px solid #8f8f8f;border-radius:3px"></div>
<div class="t" style="left:11.00px;top:78px;font-size:16.00px;color:#000;">March</div>
<div class="a" style="left:0px;top:105px;width:239px;height:31px;background:#b4c6e7;border:1px solid #8f8f8f;border-radius:3px"></div>
<div class="t" style="left:11.00px;top:113px;font-size:16.00px;color:#000;">April</div>
<div class="a" style="left:0px;top:140px;width:239px;height:31px;background:#b4c6e7;border:1px solid #8f8f8f;border-radius:3px"></div>
<div class="t" style="left:11.00px;top:148px;font-size:16.00px;color:#000;">May</div>
<div class="a" style="left:0px;top:175px;width:239px;height:31px;background:#b4c6e7;border:1px solid #8f8f8f;border-radius:3px"></div>
<div class="t" style="left:11.00px;top:183px;font-size:16.00px;color:#000;">June</div>
<div class="a" style="left:0px;top:210px;width:239px;height:31px;background:#b4c6e7;border:1px solid #8f8f8f;border-radius:3px"></div>
<div class="t" style="left:11.00px;top:218px;font-size:16.00px;color:#000;">July</div>
<div class="a" style="left:0px;top:245px;width:239px;height:31px;background:#b4c6e7;border:1px solid #8f8f8f;border-radius:3px"></div>
<div class="t" style="left:11.00px;top:253px;font-size:16.00px;color:#000;">August</div>
<div class="a" style="left:0px;top:280px;width:239px;height:31px;background:#b4c6e7;border:1px solid #8f8f8f;border-radius:3px"></div>
<div class="t" style="left:11.00px;top:288px;font-size:16.00px;color:#000;">September</div>
<div class="a" style="left:0px;top:315px;width:239px;height:31px;background:#b4c6e7;border:1px solid #8f8f8f;border-radius:3px"></div>
<div class="t" style="left:11.00px;top:323px;font-size:16.00px;color:#000;">October</div>
<div class="a" style="left:0px;top:350px;width:239px;height:31px;background:#b4c6e7;border:1px solid #8f8f8f;border-radius:3px"></div>
<div class="t" style="left:11.00px;top:358px;font-size:16.00px;color:#000;">November</div>
<div class="a" style="left:0px;top:385px;width:239px;height:31px;background:#b4c6e7;border:1px solid #8f8f8f;border-radius:3px"></div>
<div class="t" style="left:11.00px;top:393px;font-size:16.00px;color:#000;">December</div>
</div>
<div class="a" style="left:1560px;top:323px;width:22px;height:410px;background:#f0f0f0"></div>
<div class="a" style="left:1568px;top:346px;width:5px;height:92px;background:#868686"></div>
<svg class="a" style="left:0;top:0;overflow:visible" width="1" height="1"><circle cx="1306.5" cy="286.5" r="6" fill="#fff" stroke="#5e5e5e" stroke-width="2.1"/><circle cx="1450.5" cy="286.5" r="6" fill="#fff" stroke="#5e5e5e" stroke-width="2.1"/><circle cx="1594.5" cy="286.5" r="6" fill="#fff" stroke="#5e5e5e" stroke-width="2.1"/><circle cx="1306.5" cy="516.0" r="6" fill="#fff" stroke="#5e5e5e" stroke-width="2.1"/><circle cx="1594.5" cy="516.0" r="6" fill="#fff" stroke="#5e5e5e" stroke-width="2.1"/><circle cx="1306.5" cy="746.5" r="6" fill="#fff" stroke="#5e5e5e" stroke-width="2.1"/><circle cx="1450.5" cy="746.5" r="6" fill="#fff" stroke="#5e5e5e" stroke-width="2.1"/><circle cx="1594.5" cy="746.5" r="6" fill="#fff" stroke="#5e5e5e" stroke-width="2.1"/></svg>
<div class="a" style="left:0px;top:962px;width:1920px;height:31px;background:#e6e6e6"></div>
<div class="a" style="left:1895px;top:250px;width:25px;height:712px;background:#e6e6e6"></div>
<div class="a" style="left:1898px;top:252px;width:19px;height:710px;background:#f0f0f0"></div>
<div class="a" style="left:1898px;top:252px;width:19px;height:19px;background:#fff;border:1px solid #a6a6a6"></div>
<svg class="a" style="left:1902px;top:258px" width="11" height="7"><path d="M0.5 6.5L5.5 1L10.5 6.5Z" fill="#222"/></svg>
<div class="a" style="left:1898px;top:272px;width:19px;height:647px;background:#fff;border:1px solid #a6a6a6"></div>
<div class="a" style="left:1898px;top:943px;width:19px;height:19px;background:#fff;border:1px solid #a6a6a6"></div>
<svg class="a" style="left:1902px;top:950px" width="11" height="7"><path d="M0.5 0.5L5.5 6L10.5 0.5Z" fill="#222"/></svg>
<svg class="a" style="left:28px;top:970px" width="45" height="14"><path d="M8.5 2L3.5 7L8.5 12Z" fill="#c0c0c0"/><path d="M60 2L65 7L60 12Z" fill="#c0c0c0" transform="translate(-1,0)"/></svg>
<svg class="a" style="left:58px;top:970px" width="10" height="14"><path d="M2 2L7 7L2 12Z" fill="#c0c0c0"/></svg>
<div class="a" style="left:112px;top:961px;width:115px;height:29px;background:#fff"></div>
<div class="a" style="left:112px;top:988px;width:115px;height:2px;background:#217346"></div>
<div class="t" style="left:124.00px;top:968px;font-size:15.50px;color:#217346;font-weight:bold;transform:scaleX(1.1039);transform-origin:0 0;">Pivot Table</div>
<div class="t" style="left:240.00px;top:968px;font-size:15.50px;color:#444;transform:scaleX(1.0795);transform-origin:0 0;">Source Data</div>
<div class="a" style="left:346px;top:965px;width:1px;height:23px;background:#b5b5b5"></div>
<svg class="a" style="left:384px;top:967px" width="22" height="22" fill="none" stroke="#6a6a6a" stroke-width="1.2"><circle cx="11" cy="11" r="9.5"/><path d="M11 6V16M6 11H16" stroke-width="1.5"/></svg>
<svg class="a" style="left:1150px;top:970px" width="4" height="14"><rect x="0" y="1" width="3" height="2.5" fill="#a8a8a8"/><rect x="0" y="6" width="3" height="2.5" fill="#a8a8a8"/><rect x="0" y="11" width="3" height="2.5" fill="#a8a8a8"/></svg>
<div class="a" style="left:1170px;top:968px;width:725px;height:19px;background:#f0f0f0"></div>
<div class="a" style="left:1170px;top:968px;width:20px;height:19px;background:#fff;border:1px solid #a6a6a6"></div>
<svg class="a" style="left:1175px;top:972px" width="8" height="12"><path d="M7 0.5L1 6L7 11.5Z" fill="#222"/></svg>
<div class="a" style="left:1189px;top:968px;width:656px;height:19px;background:#fff;border:1px solid #a6a6a6"></div>
<div class="a" style="left:1876px;top:968px;width:19px;height:19px;background:#fff;border:1px solid #a6a6a6"></div>
<svg class="a" style="left:1883px;top:972px" width="8" height="12"><path d="M1 0.5L7 6L1 11.5Z" fill="#222"/></svg>
<div class="a" style="left:0px;top:993px;width:1920px;height:27px;background:#f3f3f3"></div>
<div class="a" style="left:0px;top:993px;width:1920px;height:1px;background:#d2d2d2"></div>
<div class="t" style="left:14.00px;top:1001px;font-size:13.50px;color:#262626;transform:scaleX(0.9226);transform-origin:0 0;">Ready</div>
<div class="a" style="left:1547px;top:994px;width:50px;height:26px;background:#c6c6c6"></div>
<svg class="a" style="left:1560px;top:997px" width="130" height="20" fill="none" stroke="#6a6a6a" stroke-width="1.2" shape-rendering="crispEdges"><rect x="4.5" y="2.5" width="15" height="15"/><path d="M9.5 2.5V17.5M14.5 2.5V17.5M4.5 7.5H19.5M4.5 12.5H19.5"/><rect x="53.5" y="2.5" width="16" height="15"/><rect x="57.5" y="4.5" width="8" height="11"/><path d="M59 8H64M59 10H64M59 12H64" stroke-width="1"/><rect x="103.5" y="2.5" width="16" height="15"/><path d="M107.5 2.5V11.5H113.5V2.5M110.5 2.5V11.5"/></svg>
<div class="a" style="left:1704px;top:1006px;width:9px;height:1.5px;background:#444"></div>
<div class="a" style="left:1720px;top:1006px;width:124px;height:1.5px;background:#444"></div>
<div class="a" style="left:1780px;top:1000px;width:6px;height:14px;background:#444"></div>
<svg class="a" style="left:1850px;top:1001px" width="12" height="12"><path d="M5.5 0V11M0 5.5H11" stroke="#444" stroke-width="1.3"/></svg>
<div class="t" style="left:1878.00px;top:1001px;font-size:13.50px;color:#444;transform:scaleX(0.8399);transform-origin:0 0;">100%</div>
<div class="a" style="left:1206px;top:196px;width:237px;height:79px;background:#fff;border:1px solid #a9a9a9;border-radius:5px;box-shadow:1px 1px 3px rgba(0,0,0,0.10)"></div>
<div class="t" style="left:1220.00px;top:207px;font-size:13.00px;color:#505050;font-weight:bold;transform:scaleX(1.0386);transform-origin:0 0;">Height</div>
<div class="t" style="left:1220.00px;top:231px;font-size:13.00px;color:#5a5a5a;transform:scaleX(1.0095);transform-origin:0 0;">Change the height of the slicer</div>
<div class="t" style="left:1220.00px;top:248px;font-size:13.00px;color:#5a5a5a;transform:scaleX(0.9946);transform-origin:0 0;">buttons.</div>
<svg class="a" style="left:0;top:0" width="1920" height="300"><line x1="1487" y1="227" x2="1375" y2="145" stroke="#e41b1b" stroke-width="5.5"/><path d="M1357.5 131.5L1385 137.5L1370.5 155Z" fill="#e41b1b" stroke="#e41b1b" stroke-width="2" stroke-linejoin="round"/></svg>
</body></html>
